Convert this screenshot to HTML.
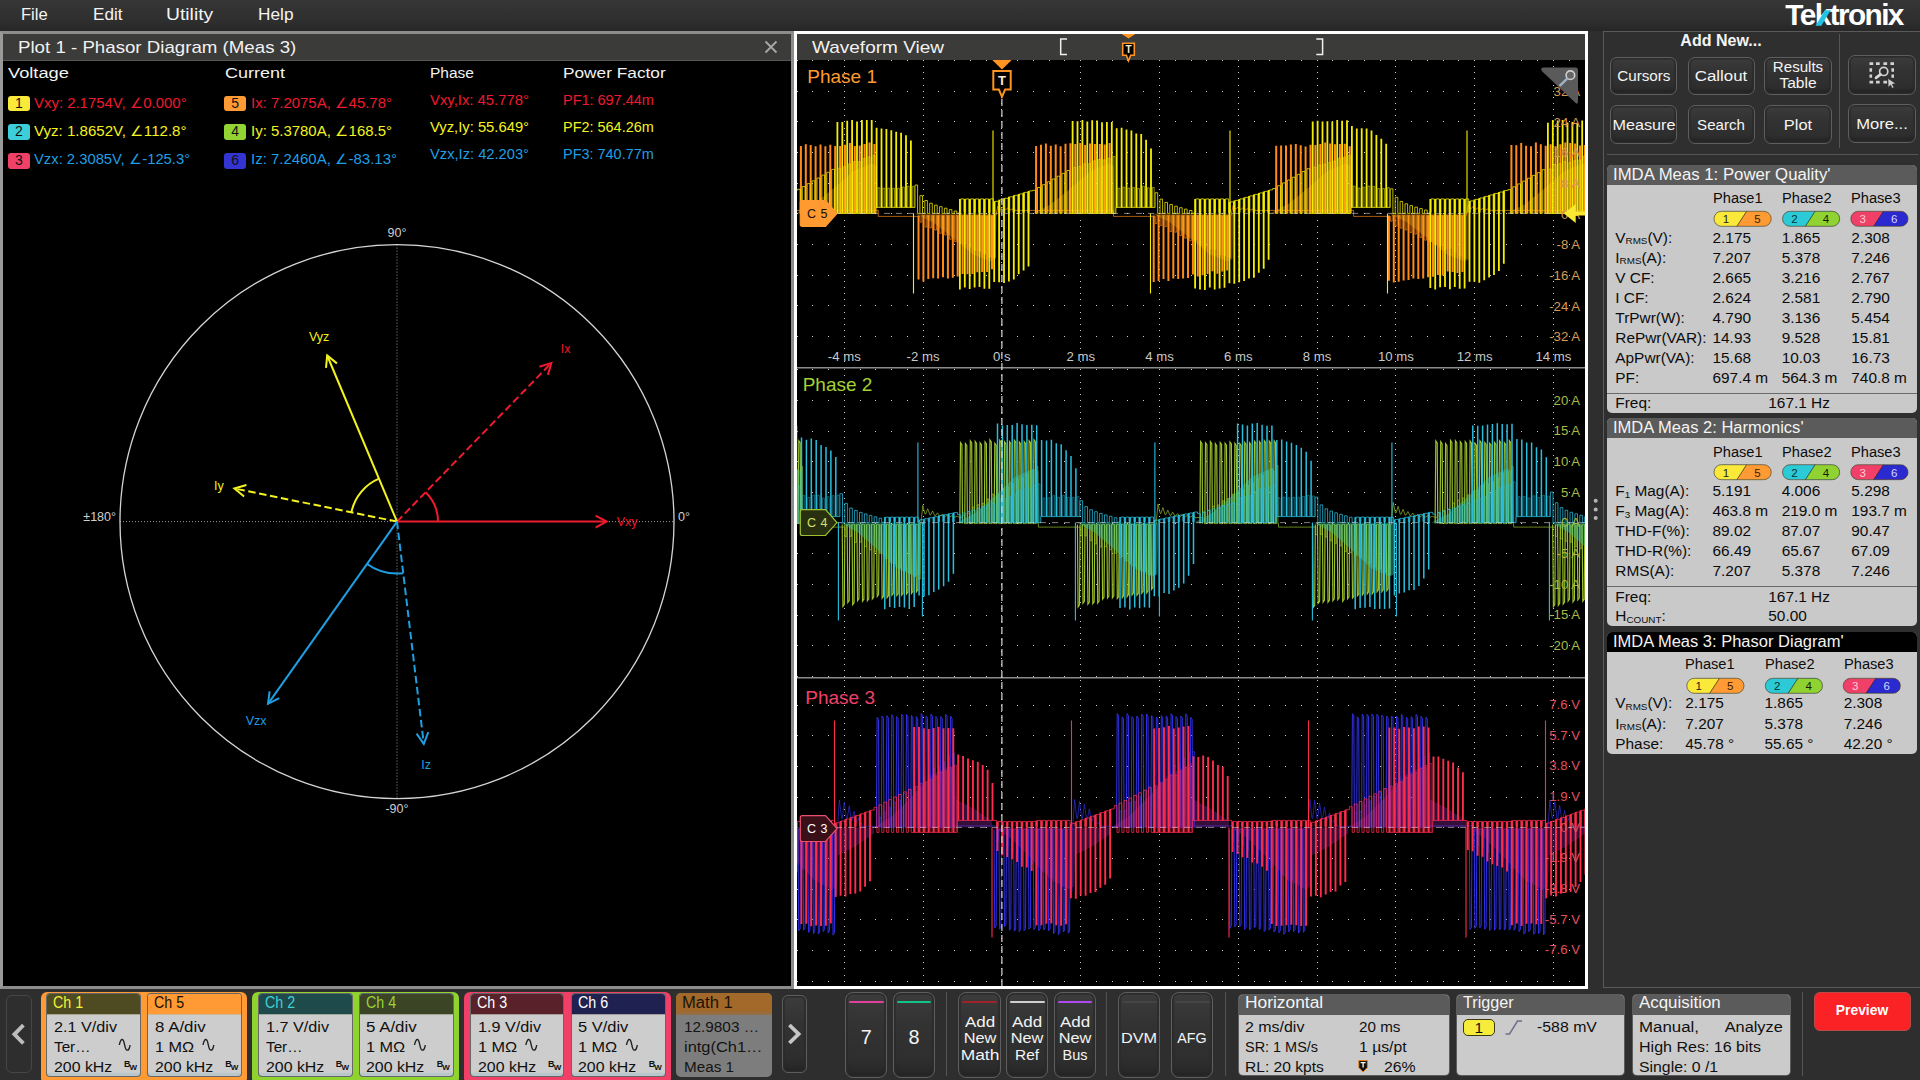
<!DOCTYPE html>
<html><head><meta charset="utf-8"><title>Tektronix IMDA</title>
<style>
html,body{margin:0;padding:0;background:#2e2e2e;overflow:hidden;}
body{width:1920px;height:1080px;position:relative;overflow:hidden;
 font-family:"Liberation Sans",sans-serif;}
.t{position:absolute;line-height:1;white-space:nowrap;}
.b{position:absolute;box-sizing:border-box;}
svg{position:absolute;left:0;top:0;overflow:visible;}
sub{font-size:64%;vertical-align:baseline;position:relative;top:0.17em;}
.btn{position:absolute;box-sizing:border-box;border:1.5px solid #5e5e5e;border-radius:7px;
 background:linear-gradient(#3c3c3c,#333 35%,#2e2e2e 80%,#262626);
 box-shadow:inset 0 0 0 1.5px #2b2b2b, inset 0 -3px 3px 0 #242424;}
</style></head>
<body>
<div class="b" style="left:0.00px;top:0.00px;width:1920.00px;height:31.00px;background:linear-gradient(#363636,#2e2e2e 70%,#262626);"></div>
<div class="t" style="top:5.52px;font-size:16.4px;color:#f4f4f4;left:21.30px;transform-origin:0 0;transform:scaleX(1.011);">File</div>
<div class="t" style="top:5.52px;font-size:16.4px;color:#f4f4f4;left:92.50px;transform-origin:0 0;transform:scaleX(1.044);">Edit</div>
<div class="t" style="top:5.52px;font-size:16.4px;color:#f4f4f4;left:165.80px;transform-origin:0 0;transform:scaleX(1.178);">Utility</div>
<div class="t" style="top:5.52px;font-size:16.4px;color:#f4f4f4;left:257.50px;transform-origin:0 0;transform:scaleX(1.053);">Help</div>
<div class="t" style="left:1785.3px;top:0.4px;font-size:29.8px;font-weight:700;color:#fff;letter-spacing:-1.6px;transform-origin:0 0;transform:scaleX(1.0);">Tektronix</div>
<svg width="1920" height="1080"><polygon points="1815.6,25.7 1821.3,25.7 1830.6,10.2 1824.9,10.2" fill="#22c4e2"/></svg>
<div class="b" style="left:0.00px;top:31.00px;width:794.00px;height:958.00px;background:#000;border:3px solid #8c8c8c;border-left-color:#9a9a9a;"></div>
<div class="b" style="left:3.00px;top:34.00px;width:788.00px;height:27.00px;background:#3b3b39;border-bottom:1px solid #555;"></div>
<div class="t" style="top:39.75px;font-size:16.6px;color:#f2f2f2;left:17.50px;transform-origin:0 0;transform:scaleX(1.126);">Plot 1 - Phasor Diagram (Meas 3)</div>
<svg width="1920" height="1080"><path d="M765.5 41.5l11 11M776.5 41.5l-11 11" stroke="#a8a8a8" stroke-width="1.8" fill="none"/></svg>
<div class="b" style="left:794.00px;top:31.00px;width:794.00px;height:958.00px;background:#000;border:3px solid #fff;"></div>
<div class="b" style="left:797.00px;top:34.00px;width:788.00px;height:26.00px;background:#3b3b39;"></div>
<div class="t" style="top:40.15px;font-size:16.6px;color:#f2f2f2;left:811.70px;transform-origin:0 0;transform:scaleX(1.145);">Waveform View</div>
<svg width="1920" height="1080" font-family="Liberation Sans, sans-serif"><path d="M120.0 521.6H674.0M397.0 244.60000000000002V798.6" stroke="#9a9a9a" stroke-width="1" stroke-dasharray="1 2" fill="none"/><circle cx="397.0" cy="521.6" r="277.0" fill="none" stroke="#d4d4d4" stroke-width="1.3"/><text x="397.0" y="236.5" font-size="12.5" fill="#cfcfcf" text-anchor="middle">90°</text><text x="397.0" y="812.5" font-size="12.5" fill="#cfcfcf" text-anchor="middle">-90°</text><text x="116" y="521" font-size="12.5" fill="#cfcfcf" text-anchor="end">±180°</text><text x="678" y="521" font-size="12.5" fill="#cfcfcf">0°</text><path d="M438.0 521.6A41 41 0 0 0 425.6 492.2" fill="none" stroke="#ee1a2e" stroke-width="2"/><path d="M379.0 478.7A46.5 46.5 0 0 0 351.4 512.3" fill="none" stroke="#f3f31f" stroke-width="2"/><path d="M367.0 564.0A52 52 0 0 0 403.2 573.2" fill="none" stroke="#1f9fe2" stroke-width="2"/><line x1="397.0" y1="521.6" x2="606.6" y2="521.6" stroke="#ee1a2e" stroke-width="2"/><polyline points="595.6,515.7 606.6,521.6 595.6,527.5" fill="none" stroke="#ee1a2e" stroke-width="2" stroke-linejoin="miter"/><text x="627.1" y="525.9" font-size="12.5" fill="#ee1a2e" text-anchor="middle">Vxy</text><line x1="397.0" y1="521.6" x2="551.4" y2="362.9" stroke="#ee1a2e" stroke-width="2" stroke-dasharray="7.5 3.6"/><polyline points="539.5,366.7 551.4,362.9 547.9,374.9" fill="none" stroke="#ee1a2e" stroke-width="2" stroke-linejoin="miter"/><text x="565.7" y="352.5" font-size="12.5" fill="#ee1a2e" text-anchor="middle">Ix</text><line x1="397.0" y1="521.6" x2="327.2" y2="355.5" stroke="#f3f31f" stroke-width="2"/><polyline points="326.0,367.9 327.2,355.5 336.9,363.4" fill="none" stroke="#f3f31f" stroke-width="2" stroke-linejoin="miter"/><text x="319.2" y="340.9" font-size="12.5" fill="#f3f31f" text-anchor="middle">Vyz</text><line x1="397.0" y1="521.6" x2="234.4" y2="488.5" stroke="#f3f31f" stroke-width="2" stroke-dasharray="7.5 3.6"/><polyline points="244.1,496.5 234.4,488.5 246.4,485.0" fill="none" stroke="#f3f31f" stroke-width="2" stroke-linejoin="miter"/><text x="218.8" y="489.6" font-size="12.5" fill="#f3f31f" text-anchor="middle">Iy</text><line x1="397.0" y1="521.6" x2="268.0" y2="703.8" stroke="#1f9fe2" stroke-width="2"/><polyline points="279.2,698.1 268.0,703.8 269.6,691.4" fill="none" stroke="#1f9fe2" stroke-width="2" stroke-linejoin="miter"/><text x="256.2" y="724.8" font-size="12.5" fill="#1f9fe2" text-anchor="middle">Vzx</text><line x1="397.0" y1="521.6" x2="423.8" y2="743.9" stroke="#1f9fe2" stroke-width="2" stroke-dasharray="7.5 3.6"/><polyline points="428.3,732.2 423.8,743.9 416.6,733.6" fill="none" stroke="#1f9fe2" stroke-width="2" stroke-linejoin="miter"/><text x="426.2" y="768.5" font-size="12.5" fill="#1f9fe2" text-anchor="middle">Iz</text></svg>
<svg width="1920" height="1080" font-family="Liberation Sans, sans-serif"><g stroke="#cacaca" stroke-width="1" fill="none" shape-rendering="crispEdges"><path d="M796.52 60.5H1585M796.52 91.5H1585M796.52 121.5H1585M796.52 152.5H1585M796.52 183.5H1585M796.52 213.5H1585M796.52 244.5H1585M796.52 275.5H1585M796.52 305.5H1585M796.52 336.5H1585" stroke-dasharray="1 14.760"/><path d="M844.5 60.06V367M923.5 60.06V367M1001.5 60.06V367M1080.5 60.06V367M1159.5 60.06V367M1238.5 60.06V367M1317.5 60.06V367M1395.5 60.06V367M1474.5 60.06V367M1553.5 60.06V367" stroke-dasharray="1 5.133"/><path d="M796.52 369.5H1585M796.52 400.5H1585M796.52 431.5H1585M796.52 461.5H1585M796.52 492.5H1585M796.52 523.5H1585M796.52 553.5H1585M796.52 584.5H1585M796.52 615.5H1585M796.52 645.5H1585M796.52 676.5H1585" stroke-dasharray="1 14.760"/><path d="M844.5 369.26V677M923.5 369.26V677M1001.5 369.26V677M1080.5 369.26V677M1159.5 369.26V677M1238.5 369.26V677M1317.5 369.26V677M1395.5 369.26V677M1474.5 369.26V677M1553.5 369.26V677" stroke-dasharray="1 5.133"/><path d="M796.52 705.5H1585M796.52 735.5H1585M796.52 766.5H1585M796.52 797.5H1585M796.52 827.5H1585M796.52 858.5H1585M796.52 889.5H1585M796.52 919.5H1585M796.52 950.5H1585M796.52 981.5H1585" stroke-dasharray="1 14.760"/><path d="M844.5 680.20V986M923.5 680.20V986M1001.5 680.20V986M1080.5 680.20V986M1159.5 680.20V986M1238.5 680.20V986M1317.5 680.20V986M1395.5 680.20V986M1474.5 680.20V986M1553.5 680.20V986" stroke-dasharray="1 5.133"/></g><path d="M797 367.7H1585M797 677.7H1585" stroke="#8c8c8c" stroke-width="1.6" fill="none"/><clipPath id="c0"><rect x="797.0" y="60.0" width="788.0" height="307.0"/></clipPath><g clip-path="url(#c0)" fill="none" stroke-linejoin="miter"><path d="M782.2 213.4H785.2V210.4H790.1V210.4H795V210.4H878.3V216.4H883.2V216.4H888.1V216.4H893V216.4H897.9V216.4H902.8V216.4H907.7V216.4H912.6V216.4H920.1V222.2H921.8V215.4H925V227.1H926.7V215.4H929.9V227.9H931.6V215.4H934.8V230H936.5V215.4H939.7V233.4H941.4V215.4H944.6V235H946.3V215.4H949.5V239.3H951.2V215.4H954.4V241.7H956.1V215.4H959.3V243.5H961V215.4H964.2V243.9H965.9V215.4H969.1V247.3H970.8V215.4H974V250.1H975.7V215.4H978.9V251.3H980.6V215.4H983.8V254.2H985.5V215.4H988.7V257.2H990.4V215.4H993.6V257.5H995.3V215.4H995.9L997.9 206L1000.1 209.1H1000.8L1002.8 207.3L1005 209.5H1005.7L1007.7 208.2L1009.9 209.7H1010.6L1012.6 208.9L1014.8 209.9H1015.5V210.4H1020.4V210.4H1025.3V210.4H1030.2V210.4H1113.5V216.4H1118.4V216.4H1123.3V216.4H1128.2V216.4H1133.1V216.4H1138V216.4H1142.9V216.4H1147.8V216.4H1155.3V223.5H1157V215.4H1160.2V225.4H1161.9V215.4H1165.1V226.6H1166.8V215.4H1170V231.6H1171.7V215.4H1174.9V232.2H1176.6V215.4H1179.8V235.7H1181.5V215.4H1184.7V238.2H1186.4V215.4H1189.6V240.8H1191.3V215.4H1194.5V240.3H1196.2V215.4H1199.4V245.2H1201.1V215.4H1204.3V247.1H1206V215.4H1209.2V248.9H1210.9V215.4H1214.1V249.3H1215.8V215.4H1219V254.8H1220.7V215.4H1223.9V255.7H1225.6V215.4H1228.8V257.7H1230.5V215.4H1231.1L1233.1 205.4L1235.3 208.9H1236L1238 206.9L1240.2 209.3H1240.9L1242.9 207.9L1245.1 209.7H1245.8L1247.8 208.7L1250 209.9H1250.7L1252.7 209.2L1254.9 210H1255.6V210.4H1260.5V210.4H1265.4V210.4H1270.3V210.4H1353.6V216.4H1358.5V216.4H1363.4V216.4H1368.3V216.4H1373.2V216.4H1378.1V216.4H1383V216.4H1390.5V221.2H1392.2V215.4H1395.4V225.9H1397.1V215.4H1400.3V228.2H1402V215.4H1405.2V230H1406.9V215.4H1410.1V232.5H1411.8V215.4H1415V234.1H1416.7V215.4H1419.9V237.6H1421.6V215.4H1424.8V240.2H1426.5V215.4H1429.7V241.9H1431.4V215.4H1434.6V244.5H1436.3V215.4H1439.5V245.8H1441.2V215.4H1444.4V249.5H1446.1V215.4H1449.3V248.4H1451V215.4H1454.2V251.8H1455.9V215.4H1459.1V256.1H1460.8V215.4H1464V258H1465.7V215.4H1466.3L1468.3 204.7L1470.5 208.7H1471.2L1473.2 206.4L1475.4 209.2H1476.1L1478.1 207.6L1480.3 209.6H1481L1483 208.4L1485.2 209.8H1485.9L1487.9 209L1490.1 210H1490.8V210.4H1495.7V210.4H1500.6V210.4H1505.5V210.4H1588.8V216.4H1593.7V216.4H1598.6V216.4H1603.5V216.4H1608.4V216.4H1613.3V216.4H1588" stroke="#ff8a18" stroke-width="0.9" opacity="0.75"/><path d="M800.9 146.1V213.4M805.8 144.3V213.4M810.7 144.9V213.4M815.6 146.2V213.4M820.5 144.4V213.4M825.4 146.3V213.4M830.3 144.7V213.4M835.2 146.1V213.4M840.1 146V213.4M845 144.7V213.4M849.9 143.1V213.4M854.8 145.9V213.4M859.7 145.5V213.4M864.6 143.9V213.4M869.5 142.6V213.4M874.4 144.1V213.4M918.5 215.4V279.6M923.4 215.4V281.4M928.3 215.4V279.1M933.2 215.4V278.2M938.1 215.4V278.6M943 215.4V277.2M947.9 215.4V278.4M952.8 215.4V277.8M957.7 215.4V276.5M962.6 215.4V273.9M967.5 215.4V274.2M972.4 215.4V274M977.3 215.4V272.2M982.2 215.4V272M987.1 215.4V272M992 215.4V269.3M1036.1 145.9V213.4M1041 144.7V213.4M1045.9 143.4V213.4M1050.8 145.8V213.4M1055.7 144.4V213.4M1060.6 146.2V213.4M1065.5 143.7V213.4M1070.4 143.3V213.4M1075.3 144.1V213.4M1080.2 142.9V213.4M1085.1 145.1V213.4M1090 143.6V213.4M1094.9 144V213.4M1099.8 144.1V213.4M1104.7 144.6V213.4M1109.6 143V213.4M1153.7 215.4V282M1158.6 215.4V280.9M1163.5 215.4V279M1168.4 215.4V280.9M1173.3 215.4V278.5M1178.2 215.4V279M1183.1 215.4V278.5M1188 215.4V278M1192.9 215.4V274.5M1197.8 215.4V276.4M1202.7 215.4V275.2M1207.6 215.4V273.9M1212.5 215.4V271.3M1217.4 215.4V273.8M1222.3 215.4V271.6M1227.2 215.4V270.5M1276.2 145.7V213.4M1281.1 145.5V213.4M1286 145.5V213.4M1290.9 144.5V213.4M1295.8 144V213.4M1300.7 145.3V213.4M1305.6 146.4V213.4M1310.5 144.7V213.4M1315.4 144.9V213.4M1320.3 144.1V213.4M1325.2 142.6V213.4M1330.1 143.6V213.4M1335 144.3V213.4M1339.9 143.9V213.4M1344.8 143.7V213.4M1349.7 146.2V213.4M1388.9 215.4V280.8M1393.8 215.4V282.4M1398.7 215.4V281.7M1403.6 215.4V280.4M1408.5 215.4V279.9M1413.4 215.4V278.5M1418.3 215.4V279M1423.2 215.4V278.5M1428.1 215.4V277.2M1433 215.4V276.7M1437.9 215.4V275M1442.8 215.4V275.6M1447.7 215.4V271.6M1452.6 215.4V271.9M1457.5 215.4V273.1M1462.4 215.4V272M1511.4 145V213.4M1516.3 145.3V213.4M1521.2 143.1V213.4M1526.1 145.8V213.4M1531 146.3V213.4M1535.9 142.6V213.4M1540.8 144.3V213.4M1545.7 145.8V213.4M1550.6 144.2V213.4M1555.5 146.3V213.4M1560.4 144.3V213.4M1565.3 142.5V213.4M1570.2 142.9V213.4M1575.1 143.6V213.4M1580 145.4V213.4M1584.9 144.9V213.4" stroke="#ff8a18" stroke-width="2.0"/><path d="M-152.5 213.4L-134.5 204.4L-114.5 188.4L-94.5 170.9L-76.5 163.4L-71.5 165.9L-70.5 213.4ZM-33.5 213.4L-15.5 222L4.5 237.4L24.5 254.2L42.5 261.4L47.5 259L48.5 213.4ZM84.5 213.4L102.5 204.4L122.5 188.4L142.5 170.9L160.5 163.4L165.5 165.9L166.5 213.4ZM203.5 213.4L221.5 222L241.5 237.4L261.5 254.2L279.5 261.4L284.5 259L285.5 213.4ZM321.5 213.4L339.5 204.4L359.5 188.4L379.5 170.9L397.5 163.4L402.5 165.9L403.5 213.4ZM440.5 213.4L458.5 222L478.5 237.4L498.5 254.2L516.5 261.4L521.5 259L522.5 213.4ZM558.5 213.4L576.5 204.4L596.5 188.4L616.5 170.9L634.5 163.4L639.5 165.9L640.5 213.4ZM677.5 213.4L695.5 222L715.5 237.4L735.5 254.2L753.5 261.4L758.5 259L759.5 213.4ZM795.5 213.4L813.5 204.4L833.5 188.4L853.5 170.9L871.5 163.4L876.5 165.9L877.5 213.4ZM914.5 213.4L932.5 222L952.5 237.4L972.5 254.2L990.5 261.4L995.5 259L996.5 213.4ZM1032.5 213.4L1050.5 204.4L1070.5 188.4L1090.5 170.9L1108.5 163.4L1113.5 165.9L1114.5 213.4ZM1151.5 213.4L1169.5 222L1189.5 237.4L1209.5 254.2L1227.5 261.4L1232.5 259L1233.5 213.4ZM1269.5 213.4L1287.5 204.4L1307.5 188.4L1327.5 170.9L1345.5 163.4L1350.5 165.9L1351.5 213.4ZM1388.5 213.4L1406.5 222L1426.5 237.4L1446.5 254.2L1464.5 261.4L1469.5 259L1470.5 213.4ZM1506.5 213.4L1524.5 204.4L1544.5 188.4L1564.5 170.9L1582.5 163.4L1587.5 165.9L1588.5 213.4ZM1625.5 213.4L1643.5 222L1663.5 237.4L1683.5 254.2L1701.5 261.4L1706.5 259L1707.5 213.4ZM1743.5 213.4L1761.5 204.4L1781.5 188.4L1801.5 170.9L1819.5 163.4L1824.5 165.9L1825.5 213.4ZM1862.5 213.4L1880.5 222L1900.5 237.4L1920.5 254.2L1938.5 261.4L1943.5 259L1944.5 213.4Z" fill="#ffb41a" stroke="none" opacity="0.3"/><path d="M779.7 213.4H782.7V212.4H784.3V193.3H787.6V212.4H789.2V191.8H792.5V212.4H794.1V190.3H797.4V189.3H800.2V213.4H802.3V186.5H805.1V213.4H807.2V183.6H810V213.4H812.1V180.8H814.9V213.4H817V178H819.8V213.4H821.9V175.1H824.7V213.4H826.8V172.3H829.6V213.4H831.7V169.4H834.5V213.4H836.6V213.4H841.5V213.4H846.4V213.4H851.3V213.4H856.2V213.4H861.1V213.4H866V213.4H870.9V213.4H875.8V207.4H880.7V207.4H885.6V207.4H890.5V207.4H895.4V207.4H900.3V207.4H905.2V207.4H910.1V207.4H915V185H917.6V213.4H919.9V195.7H922.5V213.4H924.8V200.5H927.4V213.4H929.7V203.2H932.3V213.4H934.6V205.1H937.2V213.4H939.5V206.7H942.1V213.4H944.4V208.2H947V213.4H949.3V209.6H951.9V213.4H954.2V211H956.8V213.4H959.1V212.4H960.7V198.9H964V212.4H965.6V198.9H968.9V212.4H970.5V198.9H973.8V212.4H975.4V198.9H978.7V212.4H980.3V198.9H983.6V212.4H985.2V198.9H988.5V212.4H990.1V198.9H993.4V212.4H995V201.3H998.3V212.4H999.9V199.8H1003.2V212.4H1004.8V198.3H1008.1V212.4H1009.7V196.8H1013V212.4H1014.6V195.3H1017.9V212.4H1019.5V193.9H1022.8V212.4H1024.4V192.4H1027.7V212.4H1029.3V190.9H1032.6V190.3H1035.4V213.4H1037.5V187.5H1040.3V213.4H1042.4V184.7H1045.2V213.4H1047.3V181.8H1050.1V213.4H1052.2V179H1055V213.4H1057.1V176.2H1059.9V213.4H1062V173.3H1064.8V213.4H1066.9V170.5H1069.7V213.4H1071.8V213.4H1076.7V213.4H1081.6V213.4H1086.5V213.4H1091.4V213.4H1096.3V213.4H1101.2V213.4H1106.1V213.4H1111V213.4H1115.9V207.4H1120.8V207.4H1125.7V207.4H1130.6V207.4H1135.5V207.4H1140.4V207.4H1145.3V207.4H1150.2V207.4H1155.1V192.7H1157.7V213.4H1160V199.1H1162.6V213.4H1164.9V202.4H1167.5V213.4H1169.8V204.5H1172.4V213.4H1174.7V206.2H1177.3V213.4H1179.6V207.7H1182.2V213.4H1184.5V209.1H1187.1V213.4H1189.4V210.5H1192V213.4H1194.3V212.4H1195.9V198.9H1199.2V212.4H1200.8V198.9H1204.1V212.4H1205.7V198.9H1209V212.4H1210.6V198.9H1213.9V212.4H1215.5V198.9H1218.8V212.4H1220.4V198.9H1223.7V212.4H1225.3V198.9H1228.6V212.4H1230.2V201.9H1233.5V212.4H1235.1V200.4H1238.4V212.4H1240V198.9H1243.3V212.4H1244.9V197.4H1248.2V212.4H1249.8V195.9H1253.1V212.4H1254.7V194.4H1258V212.4H1259.6V192.9H1262.9V212.4H1264.5V191.4H1267.8V212.4H1269.4V189.9H1272.7V188.5H1275.5V213.4H1277.6V185.7H1280.4V213.4H1282.5V182.9H1285.3V213.4H1287.4V180H1290.2V213.4H1292.3V177.2H1295.1V213.4H1297.2V174.4H1300V213.4H1302.1V171.5H1304.9V213.4H1307V168.7H1309.8V213.4H1311.9V213.4H1316.8V213.4H1321.7V213.4H1326.6V213.4H1331.5V213.4H1336.4V213.4H1341.3V213.4H1346.2V213.4H1351.1V207.4H1356V207.4H1360.9V207.4H1365.8V207.4H1370.7V207.4H1375.6V207.4H1380.5V207.4H1385.4V207.4H1390.3V188.8H1392.9V213.4H1395.2V197.3H1397.8V213.4H1400.1V201.4H1402.7V213.4H1405V203.8H1407.6V213.4H1409.9V205.6H1412.5V213.4H1414.8V207.1H1417.4V213.4H1419.7V208.6H1422.3V213.4H1424.6V210H1427.2V213.4H1429.5V212.4H1431.1V198.9H1434.4V212.4H1436V198.9H1439.3V212.4H1440.9V198.9H1444.2V212.4H1445.8V198.9H1449.1V212.4H1450.7V198.9H1454V212.4H1455.6V198.9H1458.9V212.4H1460.5V198.9H1463.8V212.4H1465.4V198.9H1468.7V212.4H1470.3V200.9H1473.6V212.4H1475.2V199.4H1478.5V212.4H1480.1V197.9H1483.4V212.4H1485V196.4H1488.3V212.4H1489.9V194.9H1493.2V212.4H1494.8V193.5H1498.1V212.4H1499.7V192H1503V212.4H1504.6V190.5H1507.9V189.6H1510.7V213.4H1512.8V186.8H1515.6V213.4H1517.7V183.9H1520.5V213.4H1522.6V181.1H1525.4V213.4H1527.5V178.2H1530.3V213.4H1532.4V175.4H1535.2V213.4H1537.3V172.6H1540.1V213.4H1542.2V169.7H1545V213.4H1547.1V213.4H1552V213.4H1556.9V213.4H1561.8V213.4H1566.7V213.4H1571.6V213.4H1576.5V213.4H1581.4V213.4H1586.3V213.4H1591.2V207.4H1596.1V207.4H1601V207.4H1605.9V207.4H1610.8V207.4H1588" stroke="#f6ee00" stroke-width="0.9" opacity="0.85"/><path d="M783.5 193.3V273.1M788.4 191.8V268M793.3 190.3V261.1M837.4 122.1V213.4M842.3 122.1V213.4M847.2 120.8V213.4M852.1 120V213.4M857 121.6V213.4M861.9 120.1V213.4M866.8 119.9V213.4M871.7 120V213.4M876.6 127.8V207.4M881.5 128.5V207.4M886.4 129.1V207.4M891.3 130.3V207.4M896.2 131.8V207.4M901.1 132.8V207.4M906 135.2V207.4M910.9 140.5V207.4M959.9 198.9V289.4M964.8 198.9V287.5M969.7 198.9V288.9M974.6 198.9V287.5M979.5 198.9V287M984.4 198.9V288.7M989.3 198.9V288.7M994.2 201.3V282M999.1 199.8V282.3M1004 198.3V283M1008.9 196.8V281.6M1013.8 195.3V279.4M1018.7 193.9V274.2M1023.6 192.4V270.4M1028.5 190.9V266.4M1072.6 121V213.4M1077.5 121.3V213.4M1082.4 120.1V213.4M1087.3 121.6V213.4M1092.2 120.3V213.4M1097.1 120.4V213.4M1102 122.3V213.4M1106.9 122.1V213.4M1111.8 122V213.4M1116.7 128.3V207.4M1121.6 127.7V207.4M1126.5 129.6V207.4M1131.4 130.5V207.4M1136.3 133.4V207.4M1141.2 133.9V207.4M1146.1 139.7V207.4M1151 148.5V207.4M1195.1 198.9V288.6M1200 198.9V289.4M1204.9 198.9V289.9M1209.8 198.9V287.5M1214.7 198.9V289.4M1219.6 198.9V288.5M1224.5 198.9V287.7M1229.4 201.9V283.2M1234.3 200.4V283.7M1239.2 198.9V282.3M1244.1 197.4V280.9M1249 195.9V278.4M1253.9 194.4V277.8M1258.8 192.9V272.8M1263.7 191.4V268.7M1268.6 189.9V259.8M1312.7 121.4V213.4M1317.6 120.8V213.4M1322.5 121.5V213.4M1327.4 121.3V213.4M1332.3 121.5V213.4M1337.2 120.1V213.4M1342.1 120.8V213.4M1347 120.3V213.4M1351.9 126.1V207.4M1356.8 128.5V207.4M1361.7 128.3V207.4M1366.6 128.4V207.4M1371.5 130.5V207.4M1376.4 135V207.4M1381.3 138.7V207.4M1386.2 143.7V207.4M1430.3 198.9V287.9M1435.2 198.9V289.5M1440.1 198.9V287.3M1445 198.9V287M1449.9 198.9V289.2M1454.8 198.9V287M1459.7 198.9V288.7M1464.6 198.9V288.4M1469.5 200.9V281.8M1474.4 199.4V281.7M1479.3 197.9V282.7M1484.2 196.4V280.2M1489.1 194.9V277.6M1494 193.5V274.9M1498.9 192V270.9M1503.8 190.5V263.7M1547.9 122.7V213.4M1552.8 119.9V213.4M1557.7 120.5V213.4M1562.6 120V213.4M1567.5 122.6V213.4M1572.4 122.1V213.4M1577.3 122.8V213.4M1582.2 120.6V213.4M1587.1 122.1V213.4M1592 128.7V207.4M1596.9 128.4V207.4M1601.8 128V207.4M1606.7 129.8V207.4M1611.6 133.7V207.4" stroke="#f6ee00" stroke-width="1.8"/><path d="M913.5 213.4V293.4M993 213.4V130.4M1150.5 213.4V293.4M1230 213.4V130.4M1387.5 213.4V293.4M1467 213.4V130.4" stroke="#f6ee00" stroke-width="1.1"/><path d="M838.8 213.4V168.1H840.6V213.4M843.7 213.4V166.6H845.5V213.4M848.6 213.4V163.8H850.4V213.4M853.5 213.4V161.5H855.3V213.4M858.4 213.4V161.5H860.2V213.4M863.3 213.4V158.5H865.1V213.4M868.2 213.4V156.9H870V213.4M873.1 213.4V155.5H874.9V213.4M878 207.4V187.8H879.8V207.4M882.9 207.4V188.2H884.7V207.4M887.8 207.4V188.2H889.6V207.4M892.7 207.4V188.3H894.5V207.4M897.6 207.4V188.3H899.4V207.4M902.5 207.4V187H904.3V207.4M907.4 207.4V186.2H909.2V207.4M912.3 207.4V186.4H914.1V207.4M1074 213.4V167.5H1075.8V213.4M1078.9 213.4V166.4H1080.7V213.4M1083.8 213.4V163.7H1085.6V213.4M1088.7 213.4V163.6H1090.5V213.4M1093.6 213.4V160.8H1095.4V213.4M1098.5 213.4V159.4H1100.3V213.4M1103.4 213.4V159.8H1105.2V213.4M1108.3 213.4V158.1H1110.1V213.4M1113.2 213.4V156.5H1115V213.4M1118.1 207.4V188.2H1119.9V207.4M1123 207.4V187.1H1124.8V207.4M1127.9 207.4V188.1H1129.7V207.4M1132.8 207.4V187.6H1134.6V207.4M1137.7 207.4V188.5H1139.5V207.4M1142.6 207.4V186.2H1144.4V207.4M1147.5 207.4V187.8H1149.3V207.4M1152.4 207.4V187.5H1154.2V207.4M1314.1 213.4V167H1315.9V213.4M1319 213.4V164.9H1320.8V213.4M1323.9 213.4V164.1H1325.7V213.4M1328.8 213.4V162.4H1330.6V213.4M1333.7 213.4V161H1335.5V213.4M1338.6 213.4V158.1H1340.4V213.4M1343.5 213.4V157.3H1345.3V213.4M1348.4 213.4V155.3H1350.2V213.4M1353.3 207.4V186.1H1355.1V207.4M1358.2 207.4V188.1H1360V207.4M1363.1 207.4V187.2H1364.9V207.4M1368 207.4V186.1H1369.8V207.4M1372.9 207.4V186.4H1374.7V207.4M1377.8 207.4V188.5H1379.6V207.4M1382.7 207.4V188.5H1384.5V207.4M1387.6 207.4V187.6H1389.4V207.4M1549.3 213.4V168.9H1551.1V213.4M1554.2 213.4V164.6H1556V213.4M1559.1 213.4V163.7H1560.9V213.4M1564 213.4V161.6H1565.8V213.4M1568.9 213.4V162.7H1570.7V213.4M1573.8 213.4V160.7H1575.6V213.4M1578.7 213.4V159.9H1580.5V213.4M1583.6 213.4V156.1H1585.4V213.4M1588.5 213.4V156.2H1590.3V213.4M1593.4 207.4V188.5H1595.2V207.4M1598.3 207.4V187.6H1600.1V207.4M1603.2 207.4V186.2H1605V207.4M1608.1 207.4V186.4H1609.9V207.4M1613 207.4V188.1H1614.8V207.4" stroke="#f6ee00" stroke-width="0.9" opacity="0.6"/></g><clipPath id="c1"><rect x="797.0" y="368.5" width="788.0" height="308.5"/></clipPath><g clip-path="url(#c1)" fill="none" stroke-linejoin="miter"><path d="M780.6 522.6H786.2V477.8H787.9V523.6H791.1V471.6H792.8V523.6H796V470H797.7V523.6H800.9V466.4H802.6V523.6H803.2V527.1H808.1V527.1H813V527.1H817.9V527.1H822.8V527.1H827.7V527.1H832.6V527.1H837.5V527.1H845V536.6H846.7V524.6H849.9V536.3H851.6V524.6H854.8V542.4H856.5V524.6H859.7V542.1H861.4V524.6H864.6V546.6H866.3V524.6H869.5V549.9H871.2V524.6H874.4V551.9H876.1V524.6H879.3V553.3H881V524.6H884.2V558.8H885.9V524.6H889.1V562.2H890.8V524.6H894V563.5H895.7V524.6H898.9V567.5H900.6V524.6H903.8V570.9H905.5V524.6H908.7V573.5H910.4V524.6H913.6V576.8H915.3V524.6H918.5V579.1H920.2V524.6H920.8L922.8 505.4L925 514H925.7L927.7 508.7L929.9 514.9H930.6L932.6 511L934.8 515.6H935.5L937.5 512.8L939.7 516.1H940.4L942.4 514L944.6 516.5H945.3L947.3 515L949.5 516.8H950.2L952.2 515.7L954.4 517H955.1L957.1 516.2L959.3 517.2H962.6V515.1H964.3V523.6H967.5V513H969.2V523.6H972.4V507.1H974.1V523.6H977.3V504.8H979V523.6H982.2V503.2H983.9V523.6H987.1V499H988.8V523.6H992V494.1H993.7V523.6H996.9V494.3H998.6V523.6H1001.8V488.4H1003.5V523.6H1006.7V486.9H1008.4V523.6H1011.6V483.6H1013.3V523.6H1016.5V479.2H1018.2V523.6H1021.4V477.9H1023.1V523.6H1026.3V474.4H1028V523.6H1031.2V470.6H1032.9V523.6H1036.1V466.4H1037.8V523.6H1038.4V527.1H1043.3V527.1H1048.2V527.1H1053.1V527.1H1058V527.1H1062.9V527.1H1067.8V527.1H1072.7V527.1H1080.2V535.6H1081.9V524.6H1085.1V535.8H1086.8V524.6H1090V540.6H1091.7V524.6H1094.9V543.8H1096.6V524.6H1099.8V547H1101.5V524.6H1104.7V546.8H1106.4V524.6H1109.6V549.6H1111.3V524.6H1114.5V553.2H1116.2V524.6H1119.4V557.7H1121.1V524.6H1124.3V560.7H1126V524.6H1129.2V563.4H1130.9V524.6H1134.1V565.6H1135.8V524.6H1139V569.6H1140.7V524.6H1143.9V571.3H1145.6V524.6H1148.8V574.9H1150.5V524.6H1153.7V575H1155.4V524.6H1156L1158 504L1160.2 513.5H1160.9L1162.9 507.6L1165.1 514.6H1165.8L1167.8 510.2L1170 515.4H1170.7L1172.7 512.2L1174.9 516H1175.6L1177.6 513.6L1179.8 516.4H1180.5L1182.5 514.7L1184.7 516.7H1185.4L1187.4 515.4L1189.6 517H1190.3L1192.3 516L1194.5 517.1H1195.2V517.6H1202.7V512.2H1204.4V523.6H1207.6V510.3H1209.3V523.6H1212.5V506.1H1214.2V523.6H1217.4V505H1219.1V523.6H1222.3V500.9H1224V523.6H1227.2V498.6H1228.9V523.6H1232.1V494.3H1233.8V523.6H1237V492.7H1238.7V523.6H1241.9V489.7H1243.6V523.6H1246.8V485.5H1248.5V523.6H1251.7V482.7H1253.4V523.6H1256.6V478.3H1258.3V523.6H1261.5V475.4H1263.2V523.6H1266.4V471.5H1268.1V523.6H1271.3V468.8H1273V523.6H1276.2V465.5H1277.9V523.6H1278.5V527.1H1283.4V527.1H1288.3V527.1H1293.2V527.1H1298.1V527.1H1303V527.1H1307.9V527.1H1315.4V534.6H1317.1V524.6H1320.3V534.3H1322V524.6H1325.2V537H1326.9V524.6H1330.1V540.9H1331.8V524.6H1335V543.3H1336.7V524.6H1339.9V545.9H1341.6V524.6H1344.8V551.4H1346.5V524.6H1349.7V552.8H1351.4V524.6H1354.6V555.7H1356.3V524.6H1359.5V557.3H1361.2V524.6H1364.4V560.3H1366.1V524.6H1369.3V563H1371V524.6H1374.2V566.9H1375.9V524.6H1379.1V568.5H1380.8V524.6H1384V572.2H1385.7V524.6H1388.9V575H1390.6V524.6H1391.2L1393.2 502.4L1395.4 513H1396.1L1398.1 506.4L1400.3 514.2H1401L1403 509.4L1405.2 515.1H1405.9L1407.9 511.5L1410.1 515.8H1410.8L1412.8 513.1L1415 516.3H1415.7L1417.7 514.3L1419.9 516.6H1420.6L1422.6 515.2L1424.8 516.9H1425.5L1427.5 515.8L1429.7 517.1H1430.4L1432.4 516.3L1434.6 517.2H1437.9V512.6H1439.6V523.6H1442.8V510.3H1444.5V523.6H1447.7V509.2H1449.4V523.6H1452.6V503H1454.3V523.6H1457.5V500.1H1459.2V523.6H1462.4V498H1464.1V523.6H1467.3V494.9H1469V523.6H1472.2V491.3H1473.9V523.6H1477.1V490.6H1478.8V523.6H1482V484.9H1483.7V523.6H1486.9V483.8H1488.6V523.6H1491.8V481.4H1493.5V523.6H1496.7V477.6H1498.4V523.6H1501.6V472.7H1503.3V523.6H1506.5V471.8H1508.2V523.6H1511.4V466.6H1513.1V523.6H1513.7V527.1H1518.6V527.1H1523.5V527.1H1528.4V527.1H1533.3V527.1H1538.2V527.1H1543.1V527.1H1548V527.1H1555.5V536.3H1557.2V524.6H1560.4V538.9H1562.1V524.6H1565.3V541.3H1567V524.6H1570.2V542.2H1571.9V524.6H1575.1V546.9H1576.8V524.6H1580V548.7H1581.7V524.6H1584.9V553.8H1586.6V524.6H1589.8V556.4H1591.5V524.6H1594.7V558.5H1596.4V524.6H1599.6V559.7H1601.3V524.6H1604.5V562.5H1606.2V524.6H1609.4V565.5H1611.1V524.6H1614.3V569.9H1616V524.6H1588" stroke="#9dc42c" stroke-width="0.9" opacity="0.75"/><path d="M783.4 523.6L784.1 443L785.5 445L786.1 523.6M788.3 523.6L789 439.9L790.4 441.9L791 523.6M793.2 523.6L793.9 441.3L795.3 443.3L795.9 523.6M798.1 523.6L798.8 440.8L800.2 442.8L800.8 523.6M842.2 524.6L842.9 606.5L844.3 604.5L844.9 524.6M847.1 524.6L847.8 602.5L849.2 600.5L849.8 524.6M852 524.6L852.7 604.7L854.1 602.7L854.7 524.6M856.9 524.6L857.6 600.6L859 598.6L859.6 524.6M861.8 524.6L862.5 601.2L863.9 599.2L864.5 524.6M866.7 524.6L867.4 600.8L868.8 598.8L869.4 524.6M871.6 524.6L872.3 599L873.7 597L874.3 524.6M876.5 524.6L877.2 596.5L878.6 594.5L879.2 524.6M881.4 524.6L882.1 598.2L883.5 596.2L884.1 524.6M886.3 524.6L887 597.8L888.4 595.8L889 524.6M891.2 524.6L891.9 595.3L893.3 593.3L893.9 524.6M896.1 524.6L896.8 595.5L898.2 593.5L898.8 524.6M901 524.6L901.7 595.1L903.1 593.1L903.7 524.6M905.9 524.6L906.6 593.9L908 591.9L908.6 524.6M910.8 524.6L911.5 593.4L912.9 591.4L913.5 524.6M915.7 524.6L916.4 591.9L917.8 589.9L918.4 524.6M959.8 523.6L960.5 442.6L961.9 444.6L962.5 523.6M964.7 523.6L965.4 443.5L966.8 445.5L967.4 523.6M969.6 523.6L970.3 440.7L971.7 442.7L972.3 523.6M974.5 523.6L975.2 441.4L976.6 443.4L977.2 523.6M979.4 523.6L980.1 442.8L981.5 444.8L982.1 523.6M984.3 523.6L985 441.7L986.4 443.7L987 523.6M989.2 523.6L989.9 439.9L991.3 441.9L991.9 523.6M994.1 523.6L994.8 443.2L996.2 445.2L996.8 523.6M999 523.6L999.7 440.3L1001.1 442.3L1001.7 523.6M1003.9 523.6L1004.6 441.9L1006 443.9L1006.6 523.6M1008.8 523.6L1009.5 441.6L1010.9 443.6L1011.5 523.6M1013.7 523.6L1014.4 440.3L1015.8 442.3L1016.4 523.6M1018.6 523.6L1019.3 442L1020.7 444L1021.3 523.6M1023.5 523.6L1024.2 441.6L1025.6 443.6L1026.2 523.6M1028.4 523.6L1029.1 440.8L1030.5 442.8L1031.1 523.6M1033.3 523.6L1034 439.7L1035.4 441.7L1036 523.6M1077.4 524.6L1078.1 606.9L1079.5 604.9L1080.1 524.6M1082.3 524.6L1083 603.3L1084.4 601.3L1085 524.6M1087.2 524.6L1087.9 604.3L1089.3 602.3L1089.9 524.6M1092.1 524.6L1092.8 603.7L1094.2 601.7L1094.8 524.6M1097 524.6L1097.7 603.1L1099.1 601.1L1099.7 524.6M1101.9 524.6L1102.6 599.1L1104 597.1L1104.6 524.6M1106.8 524.6L1107.5 598L1108.9 596L1109.5 524.6M1111.7 524.6L1112.4 597.9L1113.8 595.9L1114.4 524.6M1116.6 524.6L1117.3 598.5L1118.7 596.5L1119.3 524.6M1121.5 524.6L1122.2 597.7L1123.6 595.7L1124.2 524.6M1126.4 524.6L1127.1 596.6L1128.5 594.6L1129.1 524.6M1131.3 524.6L1132 595L1133.4 593L1134 524.6M1136.2 524.6L1136.9 595.2L1138.3 593.2L1138.9 524.6M1141.1 524.6L1141.8 593.1L1143.2 591.1L1143.8 524.6M1146 524.6L1146.7 592.9L1148.1 590.9L1148.7 524.6M1150.9 524.6L1151.6 589.2L1153 587.2L1153.6 524.6M1199.9 523.6L1200.6 441.6L1202 443.6L1202.6 523.6M1204.8 523.6L1205.5 442.8L1206.9 444.8L1207.5 523.6M1209.7 523.6L1210.4 441.6L1211.8 443.6L1212.4 523.6M1214.6 523.6L1215.3 443.6L1216.7 445.6L1217.3 523.6M1219.5 523.6L1220.2 442.5L1221.6 444.5L1222.2 523.6M1224.4 523.6L1225.1 443.2L1226.5 445.2L1227.1 523.6M1229.3 523.6L1230 442L1231.4 444L1232 523.6M1234.2 523.6L1234.9 443.4L1236.3 445.4L1236.9 523.6M1239.1 523.6L1239.8 443.5L1241.2 445.5L1241.8 523.6M1244 523.6L1244.7 442.4L1246.1 444.4L1246.7 523.6M1248.9 523.6L1249.6 442.7L1251 444.7L1251.6 523.6M1253.8 523.6L1254.5 441.3L1255.9 443.3L1256.5 523.6M1258.7 523.6L1259.4 441.5L1260.8 443.5L1261.4 523.6M1263.6 523.6L1264.3 440.6L1265.7 442.6L1266.3 523.6M1268.5 523.6L1269.2 441L1270.6 443L1271.2 523.6M1273.4 523.6L1274.1 440.7L1275.5 442.7L1276.1 523.6M1312.6 524.6L1313.3 607.3L1314.7 605.3L1315.3 524.6M1317.5 524.6L1318.2 603.2L1319.6 601.2L1320.2 524.6M1322.4 524.6L1323.1 602.1L1324.5 600.1L1325.1 524.6M1327.3 524.6L1328 602.2L1329.4 600.2L1330 524.6M1332.2 524.6L1332.9 600.8L1334.3 598.8L1334.9 524.6M1337.1 524.6L1337.8 599.6L1339.2 597.6L1339.8 524.6M1342 524.6L1342.7 601.3L1344.1 599.3L1344.7 524.6M1346.9 524.6L1347.6 598.8L1349 596.8L1349.6 524.6M1351.8 524.6L1352.5 598L1353.9 596L1354.5 524.6M1356.7 524.6L1357.4 595.7L1358.8 593.7L1359.4 524.6M1361.6 524.6L1362.3 594.9L1363.7 592.9L1364.3 524.6M1366.5 524.6L1367.2 593.9L1368.6 591.9L1369.2 524.6M1371.4 524.6L1372.1 593.9L1373.5 591.9L1374.1 524.6M1376.3 524.6L1377 591.7L1378.4 589.7L1379 524.6M1381.2 524.6L1381.9 591.6L1383.3 589.6L1383.9 524.6M1386.1 524.6L1386.8 590.6L1388.2 588.6L1388.8 524.6M1435.1 523.6L1435.8 440.9L1437.2 442.9L1437.8 523.6M1440 523.6L1440.7 441.6L1442.1 443.6L1442.7 523.6M1444.9 523.6L1445.6 443.6L1447 445.6L1447.6 523.6M1449.8 523.6L1450.5 440.4L1451.9 442.4L1452.5 523.6M1454.7 523.6L1455.4 440.6L1456.8 442.6L1457.4 523.6M1459.6 523.6L1460.3 441.6L1461.7 443.6L1462.3 523.6M1464.5 523.6L1465.2 441.5L1466.6 443.5L1467.2 523.6M1469.4 523.6L1470.1 441L1471.5 443L1472.1 523.6M1474.3 523.6L1475 443.3L1476.4 445.3L1477 523.6M1479.2 523.6L1479.9 440.7L1481.3 442.7L1481.9 523.6M1484.1 523.6L1484.8 442.6L1486.2 444.6L1486.8 523.6M1489 523.6L1489.7 443.3L1491.1 445.3L1491.7 523.6M1493.9 523.6L1494.6 442.5L1496 444.5L1496.6 523.6M1498.8 523.6L1499.5 440.7L1500.9 442.7L1501.5 523.6M1503.7 523.6L1504.4 442.8L1505.8 444.8L1506.4 523.6M1508.6 523.6L1509.3 440.6L1510.7 442.6L1511.3 523.6M1552.7 524.6L1553.4 606.6L1554.8 604.6L1555.4 524.6M1557.6 524.6L1558.3 605.4L1559.7 603.4L1560.3 524.6M1562.5 524.6L1563.2 604L1564.6 602L1565.2 524.6M1567.4 524.6L1568.1 601.1L1569.5 599.1L1570.1 524.6M1572.3 524.6L1573 601.9L1574.4 599.9L1575 524.6M1577.2 524.6L1577.9 599.9L1579.3 597.9L1579.9 524.6M1582.1 524.6L1582.8 601.2L1584.2 599.2L1584.8 524.6M1587 524.6L1587.7 600.1L1589.1 598.1L1589.7 524.6M1591.9 524.6L1592.6 598.3L1594 596.3L1594.6 524.6M1596.8 524.6L1597.5 595.8L1598.9 593.8L1599.5 524.6M1601.7 524.6L1602.4 594.7L1603.8 592.7L1604.4 524.6M1606.6 524.6L1607.3 593.9L1608.7 591.9L1609.3 524.6M1611.5 524.6L1612.2 594.5L1613.6 592.5L1614.2 524.6" stroke="#9dc42c" stroke-width="1.15"/><path d="M-227.6 522.6L-209.6 512.9L-189.6 495.6L-169.6 476.7L-151.6 468.6L-146.6 471.3L-145.6 522.6ZM-108.6 522.6L-90.6 532.3L-70.6 549.6L-50.6 568.5L-32.6 576.6L-27.6 573.9L-26.6 522.6ZM9.4 522.6L27.4 512.9L47.4 495.6L67.4 476.7L85.4 468.6L90.4 471.3L91.4 522.6ZM128.4 522.6L146.4 532.3L166.4 549.6L186.4 568.5L204.4 576.6L209.4 573.9L210.4 522.6ZM246.4 522.6L264.4 512.9L284.4 495.6L304.4 476.7L322.4 468.6L327.4 471.3L328.4 522.6ZM365.4 522.6L383.4 532.3L403.4 549.6L423.4 568.5L441.4 576.6L446.4 573.9L447.4 522.6ZM483.4 522.6L501.4 512.9L521.4 495.6L541.4 476.7L559.4 468.6L564.4 471.3L565.4 522.6ZM602.4 522.6L620.4 532.3L640.4 549.6L660.4 568.5L678.4 576.6L683.4 573.9L684.4 522.6ZM720.4 522.6L738.4 512.9L758.4 495.6L778.4 476.7L796.4 468.6L801.4 471.3L802.4 522.6ZM839.4 522.6L857.4 532.3L877.4 549.6L897.4 568.5L915.4 576.6L920.4 573.9L921.4 522.6ZM957.4 522.6L975.4 512.9L995.4 495.6L1015.4 476.7L1033.4 468.6L1038.4 471.3L1039.4 522.6ZM1076.4 522.6L1094.4 532.3L1114.4 549.6L1134.4 568.5L1152.4 576.6L1157.4 573.9L1158.4 522.6ZM1194.4 522.6L1212.4 512.9L1232.4 495.6L1252.4 476.7L1270.4 468.6L1275.4 471.3L1276.4 522.6ZM1313.4 522.6L1331.4 532.3L1351.4 549.6L1371.4 568.5L1389.4 576.6L1394.4 573.9L1395.4 522.6ZM1431.4 522.6L1449.4 512.9L1469.4 495.6L1489.4 476.7L1507.4 468.6L1512.4 471.3L1513.4 522.6ZM1550.4 522.6L1568.4 532.3L1588.4 549.6L1608.4 568.5L1626.4 576.6L1631.4 573.9L1632.4 522.6ZM1668.4 522.6L1686.4 512.9L1706.4 495.6L1726.4 476.7L1744.4 468.6L1749.4 471.3L1750.4 522.6ZM1787.4 522.6L1805.4 532.3L1825.4 549.6L1845.4 568.5L1863.4 576.6L1868.4 573.9L1869.4 522.6Z" fill="#3cc89a" stroke="none" opacity="0.42"/><path d="M778.1 522.6H781.1V522.6H786V522.6H790.9V522.6H795.8V522.6H800.7V516.6H805.6V516.6H810.5V516.6H815.4V516.6H820.3V516.6H825.2V516.6H830.1V516.6H835V516.6H839.9V493.7H842.5V522.6H844.8V503.4H847.4V522.6H849.7V508H852.3V522.6H854.6V510.5H857.2V522.6H859.5V512.4H862.1V522.6H864.4V513.9H867V522.6H869.3V515.4H871.9V522.6H874.2V516.8H876.8V522.6H879.1V518.2H881.7V522.6H884V521.6H885.6V517.1H888.9V521.6H890.5V517.1H893.8V521.6H895.4V517.1H898.7V521.6H900.3V517.1H903.6V521.6H905.2V517.1H908.5V521.6H910.1V517.1H913.4V521.6H915V517.1H918.3V521.6H919.9V519.7H923.2V521.6H924.8V518.7H928.1V521.6H929.7V517.7H933V521.6H934.6V516.7H937.9V521.6H939.5V515.6H942.8V521.6H944.4V514.6H947.7V521.6H949.3V513.6H952.6V521.6H954.2V512.6H957.5V514.6H960.3V522.6H962.4V513H965.2V522.6H967.3V511.5H970.1V522.6H972.2V509.9H975V522.6H977.1V508.4H979.9V522.6H982V506.8H984.8V522.6H986.9V505.3H989.7V522.6H991.8V503.7H994.6V522.6H996.7V522.6H1001.6V522.6H1006.5V522.6H1011.4V522.6H1016.3V522.6H1021.2V522.6H1026.1V522.6H1031V522.6H1035.9V522.6H1040.8V516.6H1045.7V516.6H1050.6V516.6H1055.5V516.6H1060.4V516.6H1065.3V516.6H1070.2V516.6H1075.1V516.6H1080V500.7H1082.6V522.6H1084.9V506.6H1087.5V522.6H1089.8V509.7H1092.4V522.6H1094.7V511.7H1097.3V522.6H1099.6V513.4H1102.2V522.6H1104.5V514.9H1107.1V522.6H1109.4V516.3H1112V522.6H1114.3V517.7H1116.9V522.6H1119.2V521.6H1120.8V517.1H1124.1V521.6H1125.7V517.1H1129V521.6H1130.6V517.1H1133.9V521.6H1135.5V517.1H1138.8V521.6H1140.4V517.1H1143.7V521.6H1145.3V517.1H1148.6V521.6H1150.2V517.1H1153.5V521.6H1155.1V520.1H1158.4V521.6H1160V519.1H1163.3V521.6H1164.9V518H1168.2V521.6H1169.8V517H1173.1V521.6H1174.7V516H1178V521.6H1179.6V515H1182.9V521.6H1184.5V514H1187.8V521.6H1189.4V513H1192.7V521.6H1194.3V512H1197.6V513.6H1200.4V522.6H1202.5V512H1205.3V522.6H1207.4V510.5H1210.2V522.6H1212.3V508.9H1215.1V522.6H1217.2V507.4H1220V522.6H1222.1V505.9H1224.9V522.6H1227V504.3H1229.8V522.6H1231.9V502.8H1234.7V522.6H1236.8V522.6H1241.7V522.6H1246.6V522.6H1251.5V522.6H1256.4V522.6H1261.3V522.6H1266.2V522.6H1271.1V522.6H1276V516.6H1280.9V516.6H1285.8V516.6H1290.7V516.6H1295.6V516.6H1300.5V516.6H1305.4V516.6H1310.3V516.6H1315.2V497.1H1317.8V522.6H1320.1V504.9H1322.7V522.6H1325V508.8H1327.6V522.6H1329.9V511.1H1332.5V522.6H1334.8V512.8H1337.4V522.6H1339.7V514.3H1342.3V522.6H1344.6V515.8H1347.2V522.6H1349.5V517.2H1352.1V522.6H1354.4V521.6H1356V517.1H1359.3V521.6H1360.9V517.1H1364.2V521.6H1365.8V517.1H1369.1V521.6H1370.7V517.1H1374V521.6H1375.6V517.1H1378.9V521.6H1380.5V517.1H1383.8V521.6H1385.4V517.1H1388.7V521.6H1390.3V517.1H1393.6V521.6H1395.2V519.4H1398.5V521.6H1400.1V518.4H1403.4V521.6H1405V517.4H1408.3V521.6H1409.9V516.4H1413.2V521.6H1414.8V515.4H1418.1V521.6H1419.7V514.4H1423V521.6H1424.6V513.3H1427.9V521.6H1429.5V512.3H1432.8V514.2H1435.6V522.6H1437.7V512.6H1440.5V522.6H1442.6V511.1H1445.4V522.6H1447.5V509.5H1450.3V522.6H1452.4V508H1455.2V522.6H1457.3V506.4H1460.1V522.6H1462.2V504.9H1465V522.6H1467.1V503.3H1469.9V522.6H1472V522.6H1476.9V522.6H1481.8V522.6H1486.7V522.6H1491.6V522.6H1496.5V522.6H1501.4V522.6H1506.3V522.6H1511.2V522.6H1516.1V516.6H1521V516.6H1525.9V516.6H1530.8V516.6H1535.7V516.6H1540.6V516.6H1545.5V516.6H1550.4V492.1H1553V522.6H1555.3V502.8H1557.9V522.6H1560.2V507.6H1562.8V522.6H1565.1V510.3H1567.7V522.6H1570V512.2H1572.6V522.6H1574.9V513.8H1577.5V522.6H1579.8V515.2H1582.4V522.6H1584.7V516.7H1587.3V522.6H1589.6V518.1H1592.2V522.6H1594.5V521.6H1596.1V517.1H1599.4V521.6H1601V517.1H1604.3V521.6H1605.9V517.1H1609.2V521.6H1610.8V517.1H1588" stroke="#27bfe0" stroke-width="0.9" opacity="0.85"/><path d="M781.9 424.6V522.6M786.8 424.7V522.6M791.7 424.7V522.6M796.6 425.7V522.6M801.5 437.4V516.6M806.4 439.8V516.6M811.3 438.4V516.6M816.2 440.1V516.6M821.1 445.1V516.6M826 447V516.6M830.9 450.4V516.6M835.8 457.1V516.6M884.8 517.1V609.2M889.7 517.1V607.1M894.6 517.1V608.1M899.5 517.1V606.9M904.4 517.1V607.5M909.3 517.1V608.9M914.2 517.1V606.9M919.1 519.7V595.6M924 518.7V596.4M928.9 517.7V595.3M933.8 516.7V592M938.7 515.6V589.5M943.6 514.6V586.3M948.5 513.6V581.8M953.4 512.6V573.8M997.5 423.4V522.6M1002.4 425.2V522.6M1007.3 425V522.6M1012.2 424.9V522.6M1017.1 423.1V522.6M1022 424.3V522.6M1026.9 425V522.6M1031.8 424.8V522.6M1036.7 425.3V522.6M1041.6 440.1V516.6M1046.5 440.6V516.6M1051.4 439.7V516.6M1056.3 443.3V516.6M1061.2 444.2V516.6M1066.1 450.3V516.6M1071 456.1V516.6M1075.9 468.3V516.6M1120 517.1V608M1124.9 517.1V607.4M1129.8 517.1V609.5M1134.7 517.1V607.4M1139.6 517.1V608.2M1144.5 517.1V607.3M1149.4 517.1V607.7M1154.3 520.1V596.2M1159.2 519.1V596.6M1164.1 518V593.1M1169 517V593.9M1173.9 516V590.5M1178.8 515V587.7M1183.7 514V583.4M1188.6 513V575.7M1193.5 512V564.1M1237.6 423.4V522.6M1242.5 424.6V522.6M1247.4 425.4V522.6M1252.3 423.4V522.6M1257.2 423.1V522.6M1262.1 424.8V522.6M1267 425.7V522.6M1271.9 425.5V522.6M1276.8 439.9V516.6M1281.7 439.6V516.6M1286.6 441.4V516.6M1291.5 442.7V516.6M1296.4 445.1V516.6M1301.3 447.7V516.6M1306.2 451.8V516.6M1311.1 460.7V516.6M1355.2 517.1V609.2M1360.1 517.1V608.1M1365 517.1V607.7M1369.9 517.1V607M1374.8 517.1V609M1379.7 517.1V608.8M1384.6 517.1V608.9M1389.5 517.1V608.4M1394.4 519.4V595.6M1399.3 518.4V593.4M1404.2 517.4V592.4M1409.1 516.4V590.3M1414 515.4V589.9M1418.9 514.4V586M1423.8 513.3V578.4M1428.7 512.3V569.4M1472.8 425.4V522.6M1477.7 425.8V522.6M1482.6 425.6V522.6M1487.5 424.5V522.6M1492.4 424.1V522.6M1497.3 423.3V522.6M1502.2 423.9V522.6M1507.1 424.2V522.6M1512 423.8V522.6M1516.9 439V516.6M1521.8 439.5V516.6M1526.7 442.6V516.6M1531.6 442.5V516.6M1536.5 447.3V516.6M1541.4 449.6V516.6M1546.3 457.2V516.6M1595.3 517.1V608.4M1600.2 517.1V608.9M1605.1 517.1V607.8M1610 517.1V609.6" stroke="#27bfe0" stroke-width="1.5"/><path d="M838.4 522.6V620.6M917.9 522.6V442.6M922.4 522.6V616.6M1075.4 522.6V620.6M1154.9 522.6V442.6M1159.4 522.6V616.6M1312.4 522.6V620.6M1391.9 522.6V442.6M1396.4 522.6V616.6M1549.4 522.6V620.6" stroke="#27bfe0" stroke-width="1.1"/><path d="M783.3 522.6V490.8H785.1V522.6M788.2 522.6V488.9H790V522.6M793.1 522.6V486.8H794.9V522.6M798 522.6V485.7H799.8V522.6M802.9 516.6V495.4H804.7V516.6M807.8 516.6V497.5H809.6V516.6M812.7 516.6V495.2H814.5V516.6M817.6 516.6V495.3H819.4V516.6M822.5 516.6V498H824.3V516.6M827.4 516.6V496.7H829.2V516.6M832.3 516.6V495.6H834.1V516.6M837.2 516.6V495.2H839V516.6M998.9 522.6V498.8H1000.7V522.6M1003.8 522.6V498.6H1005.6V522.6M1008.7 522.6V496.2H1010.5V522.6M1013.6 522.6V494.1H1015.4V522.6M1018.5 522.6V490.1H1020.3V522.6M1023.4 522.6V489.3H1025.2V522.6M1028.3 522.6V487.9H1030.1V522.6M1033.2 522.6V485.6H1035V522.6M1038.1 522.6V483.9H1039.9V522.6M1043 516.6V498H1044.8V516.6M1047.9 516.6V497.8H1049.7V516.6M1052.8 516.6V495.6H1054.6V516.6M1057.7 516.6V497.2H1059.5V516.6M1062.6 516.6V495.3H1064.4V516.6M1067.5 516.6V497.4H1069.3V516.6M1072.4 516.6V497.3H1074.2V516.6M1077.3 516.6V496.6H1079.1V516.6M1239 522.6V497.5H1240.8V522.6M1243.9 522.6V496.6H1245.7V522.6M1248.8 522.6V495.4H1250.6V522.6M1253.7 522.6V491.2H1255.5V522.6M1258.6 522.6V488.8H1260.4V522.6M1263.5 522.6V488.4H1265.3V522.6M1268.4 522.6V487.2H1270.2V522.6M1273.3 522.6V484.9H1275.1V522.6M1278.2 516.6V497.8H1280V516.6M1283.1 516.6V497.1H1284.9V516.6M1288 516.6V497.8H1289.8V516.6M1292.9 516.6V497.4H1294.7V516.6M1297.8 516.6V497.3H1299.6V516.6M1302.7 516.6V496.4H1304.5V516.6M1307.6 516.6V495.4H1309.4V516.6M1312.5 516.6V495.9H1314.3V516.6M1474.2 522.6V500.2H1476V522.6M1479.1 522.6V498.6H1480.9V522.6M1484 522.6V496.3H1485.8V522.6M1488.9 522.6V493.1H1490.7V522.6M1493.8 522.6V490.5H1495.6V522.6M1498.7 522.6V487.7H1500.5V522.6M1503.6 522.6V486.2H1505.4V522.6M1508.5 522.6V484.3H1510.3V522.6M1513.4 522.6V481.9H1515.2V522.6M1518.3 516.6V496.7H1520.1V516.6M1523.2 516.6V496.4H1525V516.6M1528.1 516.6V498H1529.9V516.6M1533 516.6V495.8H1534.8V516.6M1537.9 516.6V497.4H1539.7V516.6M1542.8 516.6V495.3H1544.6V516.6M1547.7 516.6V496.2H1549.5V516.6" stroke="#27bfe0" stroke-width="0.9" opacity="0.5"/></g><clipPath id="c2"><rect x="797.0" y="678.5" width="788.0" height="307.5"/></clipPath><g clip-path="url(#c2)" fill="none" stroke-linejoin="miter"><path d="M780.5 827.4H786.1V860.3H787.8V829.4H791V863.1H792.7V829.4H795.9V864.6H797.6V829.4H800.8V869.3H802.5V829.4H805.7V871.8H807.4V829.4H810.6V876.9H812.3V829.4H815.5V881.3H817.2V829.4H820.4V884.7H822.1V829.4H825.3V885.3H827V829.4H830.2V889.8H831.9V829.4H835.1V894.8H836.8V829.4H837.4L839.4 800L841.6 818.5H842.3L844.3 802.2L846.5 819.1H847.2L849.2 805.9L851.4 820.2H852.1L854.1 811.1L856.3 821.8H857L859 817.9L861.2 823.8H861.9V826.4H866.8V826.4H871.7V826.4H879.2V817.5H880.9V827.4H884.1V812.1H885.8V827.4H889V807.6H890.7V827.4H893.9V802.3H895.6V827.4H898.8V800H900.5V827.4H903.7V793.4H905.4V827.4H908.6V789.4H910.3V827.4H913.5V786.1H915.2V827.4H918.4V783.1H920.1V827.4H923.3V775.8H925V827.4H928.2V774.2H929.9V827.4H933.1V768H934.8V827.4H938V766.1H939.7V827.4H942.9V761.9H944.6V827.4H947.8V755.5H949.5V827.4H952.7V753.2H954.4V827.4H955V825.9H959.9V825.9H964.8V825.9H969.7V825.9H974.6V825.9H979.5V825.9H984.4V825.9H989.3V825.9H996.8V841.4H998.5V829.4H1001.7V845.6H1003.4V829.4H1006.6V846H1008.3V829.4H1011.5V852.7H1013.2V829.4H1016.4V856.6H1018.1V829.4H1021.3V860H1023V829.4H1026.2V862.1H1027.9V829.4H1031.1V863.5H1032.8V829.4H1036V867.1H1037.7V829.4H1040.9V871.1H1042.6V829.4H1045.8V873.5H1047.5V829.4H1050.7V877.2H1052.4V829.4H1055.6V883.1H1057.3V829.4H1060.5V887.1H1062.2V829.4H1065.4V887.6H1067.1V829.4H1070.3V891.8H1072V829.4H1072.6L1074.6 799.6L1076.8 818.4H1077.5L1079.5 801.2L1081.7 818.8H1082.4L1084.4 804.3L1086.6 819.8H1087.3L1089.3 809L1091.5 821.2H1092.2L1094.2 815.2L1096.4 823H1097.1L1099.1 823L1101.3 825.4H1102V826.4H1106.9V826.4H1111.8V826.4H1119.3V811.2H1121V827.4H1124.2V810.3H1125.9V827.4H1129.1V802.7H1130.8V827.4H1134V801.5H1135.7V827.4H1138.9V796.7H1140.6V827.4H1143.8V790.6H1145.5V827.4H1148.7V786.4H1150.4V827.4H1153.6V783.7H1155.3V827.4H1158.5V781H1160.2V827.4H1163.4V775.1H1165.1V827.4H1168.3V771.3H1170V827.4H1173.2V764.9H1174.9V827.4H1178.1V763.6H1179.8V827.4H1183V758.7H1184.7V827.4H1187.9V752.3H1189.6V827.4H1192.8V751.6H1194.5V827.4H1195.1V825.9H1200V825.9H1204.9V825.9H1209.8V825.9H1214.7V825.9H1219.6V825.9H1224.5V825.9H1232V840.7H1233.7V829.4H1236.9V842.1H1238.6V829.4H1241.8V845H1243.5V829.4H1246.7V850.7H1248.4V829.4H1251.6V854.4H1253.3V829.4H1256.5V855.1H1258.2V829.4H1261.4V859.9H1263.1V829.4H1266.3V864.8H1268V829.4H1271.2V866.5H1272.9V829.4H1276.1V871.5H1277.8V829.4H1281V875.1H1282.7V829.4H1285.9V879.7H1287.6V829.4H1290.8V880.1H1292.5V829.4H1295.7V882.9H1297.4V829.4H1300.6V887.5H1302.3V829.4H1305.5V889.7H1307.2V829.4H1307.8L1309.8 799.4L1312 818.3H1312.7L1314.7 800.4L1316.9 818.6H1317.6L1319.6 803L1321.8 819.4H1322.5L1324.5 807.1L1326.7 820.6H1327.4L1329.4 812.8L1331.6 822.3H1332.3L1334.3 819.9L1336.5 824.5H1337.2V826.4H1342.1V826.4H1347V826.4H1354.5V812.9H1356.2V827.4H1359.4V811.6H1361.1V827.4H1364.3V804.9H1366V827.4H1369.2V800.9H1370.9V827.4H1374.1V796.4H1375.8V827.4H1379V792.4H1380.7V827.4H1383.9V788.8H1385.6V827.4H1388.8V785.7H1390.5V827.4H1393.7V781.5H1395.4V827.4H1398.6V777.1H1400.3V827.4H1403.5V771.2H1405.2V827.4H1408.4V769.8H1410.1V827.4H1413.3V765.1H1415V827.4H1418.2V758.7H1419.9V827.4H1423.1V756.5H1424.8V827.4H1428V753H1429.7V827.4H1430.3V825.9H1435.2V825.9H1440.1V825.9H1445V825.9H1449.9V825.9H1454.8V825.9H1459.7V825.9H1464.6V825.9H1472.1V843.5H1473.8V829.4H1477V845.3H1478.7V829.4H1481.9V847.9H1483.6V829.4H1486.8V852.4H1488.5V829.4H1491.7V856.8H1493.4V829.4H1496.6V859.5H1498.3V829.4H1501.5V862.1H1503.2V829.4H1506.4V865.4H1508.1V829.4H1511.3V868.5H1513V829.4H1516.2V871.6H1517.9V829.4H1521.1V875.8H1522.8V829.4H1526V881.4H1527.7V829.4H1530.9V882H1532.6V829.4H1535.8V887.6H1537.5V829.4H1540.7V890H1542.4V829.4H1545.6V894.2H1547.3V829.4H1547.9L1549.9 799.9L1552.1 818.4H1552.8L1554.8 801.9L1557 819H1557.7L1559.7 805.4L1561.9 820.1H1562.6L1564.6 810.5L1566.8 821.6H1567.5L1569.5 817.1L1571.7 823.6H1572.4V826.4H1577.3V826.4H1582.2V826.4H1589.7V816.5H1591.4V827.4H1594.6V809.9H1596.3V827.4H1599.5V807.6H1601.2V827.4H1604.4V804.5H1606.1V827.4H1609.3V798H1611V827.4H1614.2V794.4H1615.9V827.4H1588" stroke="#3030e4" stroke-width="0.9" opacity="0.75"/><path d="M783.3 829.4L784 930.8L785.4 928.8L786 829.4M788.2 829.4L788.9 930.6L790.3 928.6L790.9 829.4M793.1 829.4L793.8 929L795.2 927L795.8 829.4M798 829.4L798.7 930.7L800.1 928.7L800.7 829.4M802.9 829.4L803.6 930.2L805 928.2L805.6 829.4M807.8 829.4L808.5 932.3L809.9 930.3L810.5 829.4M812.7 829.4L813.4 933.7L814.8 931.7L815.4 829.4M817.6 829.4L818.3 934L819.7 932L820.3 829.4M822.5 829.4L823.2 931.6L824.6 929.6L825.2 829.4M827.4 829.4L828.1 933.1L829.5 931.1L830.1 829.4M832.3 829.4L833 935.1L834.4 933.1L835 829.4M876.4 827.4L877.1 717.3L878.5 719.3L879.1 827.4M881.3 827.4L882 716L883.4 718L884 827.4M886.2 827.4L886.9 715.7L888.3 717.7L888.9 827.4M891.1 827.4L891.8 714.7L893.2 716.7L893.8 827.4M896 827.4L896.7 716.6L898.1 718.6L898.7 827.4M900.9 827.4L901.6 714.2L903 716.2L903.6 827.4M905.8 827.4L906.5 714.4L907.9 716.4L908.5 827.4M910.7 827.4L911.4 715.4L912.8 717.4L913.4 827.4M915.6 827.4L916.3 716.6L917.7 718.6L918.3 827.4M920.5 827.4L921.2 713.5L922.6 715.5L923.2 827.4M925.4 827.4L926.1 716.2L927.5 718.2L928.1 827.4M930.3 827.4L931 714.1L932.4 716.1L933 827.4M935.2 827.4L935.9 716.5L937.3 718.5L937.9 827.4M940.1 827.4L940.8 716.5L942.2 718.5L942.8 827.4M945 827.4L945.7 714.4L947.1 716.4L947.7 827.4M949.9 827.4L950.6 716.2L952 718.2L952.6 827.4M994 829.4L994.7 928L996.1 926L996.7 829.4M998.9 829.4L999.6 929.2L1001 927.2L1001.6 829.4M1003.8 829.4L1004.5 926.6L1005.9 924.6L1006.5 829.4M1008.7 829.4L1009.4 930.3L1010.8 928.3L1011.4 829.4M1013.6 829.4L1014.3 931.1L1015.7 929.1L1016.3 829.4M1018.5 829.4L1019.2 931.6L1020.6 929.6L1021.2 829.4M1023.4 829.4L1024.1 930.7L1025.5 928.7L1026.1 829.4M1028.3 829.4L1029 929.1L1030.4 927.1L1031 829.4M1033.2 829.4L1033.9 929.6L1035.3 927.6L1035.9 829.4M1038.1 829.4L1038.8 930.6L1040.2 928.6L1040.8 829.4M1043 829.4L1043.7 930L1045.1 928L1045.7 829.4M1047.9 829.4L1048.6 930.7L1050 928.7L1050.6 829.4M1052.8 829.4L1053.5 933.6L1054.9 931.6L1055.5 829.4M1057.7 829.4L1058.4 934.6L1059.8 932.6L1060.4 829.4M1062.6 829.4L1063.3 932L1064.7 930L1065.3 829.4M1067.5 829.4L1068.2 933.2L1069.6 931.2L1070.2 829.4M1116.5 827.4L1117.2 713.6L1118.6 715.6L1119.2 827.4M1121.4 827.4L1122.1 716.9L1123.5 718.9L1124.1 827.4M1126.3 827.4L1127 713.5L1128.4 715.5L1129 827.4M1131.2 827.4L1131.9 716.6L1133.3 718.6L1133.9 827.4M1136.1 827.4L1136.8 716L1138.2 718L1138.8 827.4M1141 827.4L1141.7 714.1L1143.1 716.1L1143.7 827.4M1145.9 827.4L1146.6 714.1L1148 716.1L1148.6 827.4M1150.8 827.4L1151.5 715.7L1152.9 717.7L1153.5 827.4M1155.7 827.4L1156.4 717.2L1157.8 719.2L1158.4 827.4M1160.6 827.4L1161.3 715.5L1162.7 717.5L1163.3 827.4M1165.5 827.4L1166.2 715.9L1167.6 717.9L1168.2 827.4M1170.4 827.4L1171.1 713.7L1172.5 715.7L1173.1 827.4M1175.3 827.4L1176 716.6L1177.4 718.6L1178 827.4M1180.2 827.4L1180.9 715.9L1182.3 717.9L1182.9 827.4M1185.1 827.4L1185.8 713.8L1187.2 715.8L1187.8 827.4M1190 827.4L1190.7 717.3L1192.1 719.3L1192.7 827.4M1229.2 829.4L1229.9 928.4L1231.3 926.4L1231.9 829.4M1234.1 829.4L1234.8 926.9L1236.2 924.9L1236.8 829.4M1239 829.4L1239.7 926.7L1241.1 924.7L1241.7 829.4M1243.9 829.4L1244.6 929.4L1246 927.4L1246.6 829.4M1248.8 829.4L1249.5 930.1L1250.9 928.1L1251.5 829.4M1253.7 829.4L1254.4 927.8L1255.8 925.8L1256.4 829.4M1258.6 829.4L1259.3 929.6L1260.7 927.6L1261.3 829.4M1263.5 829.4L1264.2 931.5L1265.6 929.5L1266.2 829.4M1268.4 829.4L1269.1 930.1L1270.5 928.1L1271.1 829.4M1273.3 829.4L1274 932.1L1275.4 930.1L1276 829.4M1278.2 829.4L1278.9 932.7L1280.3 930.7L1280.9 829.4M1283.1 829.4L1283.8 934.3L1285.2 932.3L1285.8 829.4M1288 829.4L1288.7 931.7L1290.1 929.7L1290.7 829.4M1292.9 829.4L1293.6 931.5L1295 929.5L1295.6 829.4M1297.8 829.4L1298.5 933.1L1299.9 931.1L1300.5 829.4M1302.7 829.4L1303.4 932.3L1304.8 930.3L1305.4 829.4M1351.7 827.4L1352.4 713.7L1353.8 715.7L1354.4 827.4M1356.6 827.4L1357.3 716.7L1358.7 718.7L1359.3 827.4M1361.5 827.4L1362.2 714.2L1363.6 716.2L1364.2 827.4M1366.4 827.4L1367.1 714.4L1368.5 716.4L1369.1 827.4M1371.3 827.4L1372 714.1L1373.4 716.1L1374 827.4M1376.2 827.4L1376.9 714.3L1378.3 716.3L1378.9 827.4M1381.1 827.4L1381.8 715L1383.2 717L1383.8 827.4M1386 827.4L1386.7 716.1L1388.1 718.1L1388.7 827.4M1390.9 827.4L1391.6 716.1L1393 718.1L1393.6 827.4M1395.8 827.4L1396.5 716L1397.9 718L1398.5 827.4M1400.7 827.4L1401.4 714.3L1402.8 716.3L1403.4 827.4M1405.6 827.4L1406.3 717.1L1407.7 719.1L1408.3 827.4M1410.5 827.4L1411.2 716.6L1412.6 718.6L1413.2 827.4M1415.4 827.4L1416.1 714.4L1417.5 716.4L1418.1 827.4M1420.3 827.4L1421 716.4L1422.4 718.4L1423 827.4M1425.2 827.4L1425.9 717.1L1427.3 719.1L1427.9 827.4M1469.3 829.4L1470 929.3L1471.4 927.3L1472 829.4M1474.2 829.4L1474.9 928.2L1476.3 926.2L1476.9 829.4M1479.1 829.4L1479.8 927.8L1481.2 925.8L1481.8 829.4M1484 829.4L1484.7 929.2L1486.1 927.2L1486.7 829.4M1488.9 829.4L1489.6 930.5L1491 928.5L1491.6 829.4M1493.8 829.4L1494.5 930.2L1495.9 928.2L1496.5 829.4M1498.7 829.4L1499.4 929.9L1500.8 927.9L1501.4 829.4M1503.6 829.4L1504.3 930.1L1505.7 928.1L1506.3 829.4M1508.5 829.4L1509.2 930.2L1510.6 928.2L1511.2 829.4M1513.4 829.4L1514.1 930.3L1515.5 928.3L1516.1 829.4M1518.3 829.4L1519 931.5L1520.4 929.5L1521 829.4M1523.2 829.4L1523.9 934.1L1525.3 932.1L1525.9 829.4M1528.1 829.4L1528.8 931.6L1530.2 929.6L1530.8 829.4M1533 829.4L1533.7 934.3L1535.1 932.3L1535.7 829.4M1537.9 829.4L1538.6 933.6L1540 931.6L1540.6 829.4M1542.8 829.4L1543.5 934.8L1544.9 932.8L1545.5 829.4M1586.9 827.4L1587.6 715.8L1589 717.8L1589.6 827.4M1591.8 827.4L1592.5 713.4L1593.9 715.4L1594.5 827.4M1596.7 827.4L1597.4 715.4L1598.8 717.4L1599.4 827.4M1601.6 827.4L1602.3 716.5L1603.7 718.5L1604.3 827.4M1606.5 827.4L1607.2 714.2L1608.6 716.2L1609.2 827.4M1611.4 827.4L1612.1 714.8L1613.5 716.8L1614.1 827.4" stroke="#3030e4" stroke-width="1.0"/><path d="M-311 827.4L-293 816.2L-273 796.4L-253 774.7L-235 765.4L-230 768.5L-229 799.5L-211 808.8L-193 821.2L-193 827.4ZM-192 827.4L-174 838.6L-154 858.4L-134 880.1L-116 889.4L-111 886.3L-110 855.3L-92 846L-74 833.6L-74 827.4ZM-74 827.4L-56 816.2L-36 796.4L-16 774.7L2 765.4L7 768.5L8 799.5L26 808.8L44 821.2L44 827.4ZM45 827.4L63 838.6L83 858.4L103 880.1L121 889.4L126 886.3L127 855.3L145 846L163 833.6L163 827.4ZM163 827.4L181 816.2L201 796.4L221 774.7L239 765.4L244 768.5L245 799.5L263 808.8L281 821.2L281 827.4ZM282 827.4L300 838.6L320 858.4L340 880.1L358 889.4L363 886.3L364 855.3L382 846L400 833.6L400 827.4ZM400 827.4L418 816.2L438 796.4L458 774.7L476 765.4L481 768.5L482 799.5L500 808.8L518 821.2L518 827.4ZM519 827.4L537 838.6L557 858.4L577 880.1L595 889.4L600 886.3L601 855.3L619 846L637 833.6L637 827.4ZM637 827.4L655 816.2L675 796.4L695 774.7L713 765.4L718 768.5L719 799.5L737 808.8L755 821.2L755 827.4ZM756 827.4L774 838.6L794 858.4L814 880.1L832 889.4L837 886.3L838 855.3L856 846L874 833.6L874 827.4ZM874 827.4L892 816.2L912 796.4L932 774.7L950 765.4L955 768.5L956 799.5L974 808.8L992 821.2L992 827.4ZM993 827.4L1011 838.6L1031 858.4L1051 880.1L1069 889.4L1074 886.3L1075 855.3L1093 846L1111 833.6L1111 827.4ZM1111 827.4L1129 816.2L1149 796.4L1169 774.7L1187 765.4L1192 768.5L1193 799.5L1211 808.8L1229 821.2L1229 827.4ZM1230 827.4L1248 838.6L1268 858.4L1288 880.1L1306 889.4L1311 886.3L1312 855.3L1330 846L1348 833.6L1348 827.4ZM1348 827.4L1366 816.2L1386 796.4L1406 774.7L1424 765.4L1429 768.5L1430 799.5L1448 808.8L1466 821.2L1466 827.4ZM1467 827.4L1485 838.6L1505 858.4L1525 880.1L1543 889.4L1548 886.3L1549 855.3L1567 846L1585 833.6L1585 827.4ZM1585 827.4L1603 816.2L1623 796.4L1643 774.7L1661 765.4L1666 768.5L1667 799.5L1685 808.8L1703 821.2L1703 827.4ZM1704 827.4L1722 838.6L1742 858.4L1762 880.1L1780 889.4L1785 886.3L1786 855.3L1804 846L1822 833.6L1822 827.4Z" fill="#8c2aa0" stroke="none" opacity="0.36"/><path d="M778 827.4H781V826.4H782.6V821.4H785.9V826.4H787.5V821.4H790.8V826.4H792.4V821.4H795.7V826.4H797.3V821.4H800.6V826.4H802.2V820.4H805.5V826.4H807.1V820.4H810.4V826.4H812V820.4H815.3V826.4H816.9V820.4H820.2V826.4H821.8V820.4H825.1V826.4H826.7V820.4H830V826.4H831.6V820.4H834.9V826.4H836.5V822.7H839.8V826.4H841.4V820.9H844.7V826.4H846.3V819.1H849.6V826.4H851.2V817.3H854.5V826.4H856.1V815.5H859.4V826.4H861V813.7H864.3V826.4H865.9V811.9H869.2V826.4H870.8V810.2H874.1V807.3H876.9V832.4H879V804.8H881.8V832.4H883.9V802.2H886.7V832.4H888.8V799.6H891.6V832.4H893.7V797H896.5V832.4H898.6V794.5H901.4V832.4H903.5V791.9H906.3V832.4H908.4V789.3H911.2V832.4H913.3V832.4H918.2V832.4H923.1V832.4H928V832.4H932.9V832.4H937.8V832.4H942.7V832.4H947.6V832.4H952.5V832.4H957.4V820.4H962.3V820.4H967.2V820.4H972.1V820.4H977V820.4H981.9V820.4H986.8V820.4H991.7V820.4H996.6V826.4H998.2V821.4H1001.5V826.4H1003.1V821.4H1006.4V826.4H1008V821.4H1011.3V826.4H1012.9V821.4H1016.2V826.4H1017.8V821.4H1021.1V826.4H1022.7V821.4H1026V826.4H1027.6V821.4H1030.9V826.4H1032.5V821.4H1035.8V826.4H1037.4V820.4H1040.7V826.4H1042.3V820.4H1045.6V826.4H1047.2V820.4H1050.5V826.4H1052.1V820.4H1055.4V826.4H1057V820.4H1060.3V826.4H1061.9V820.4H1065.2V826.4H1066.8V820.4H1070.1V826.4H1071.7V823.4H1075V826.4H1076.6V821.6H1079.9V826.4H1081.5V819.8H1084.8V826.4H1086.4V818H1089.7V826.4H1091.3V816.2H1094.6V826.4H1096.2V814.4H1099.5V826.4H1101.1V812.6H1104.4V826.4H1106V810.8H1109.3V826.4H1110.9V809H1114.2V805.7H1117V832.4H1119.1V803.1H1121.9V832.4H1124V800.6H1126.8V832.4H1128.9V798H1131.7V832.4H1133.8V795.4H1136.6V832.4H1138.7V792.8H1141.5V832.4H1143.6V790.2H1146.4V832.4H1148.5V787.7H1151.3V832.4H1153.4V832.4H1158.3V832.4H1163.2V832.4H1168.1V832.4H1173V832.4H1177.9V832.4H1182.8V832.4H1187.7V832.4H1192.6V820.4H1197.5V820.4H1202.4V820.4H1207.3V820.4H1212.2V820.4H1217.1V820.4H1222V820.4H1226.9V820.4H1231.8V826.4H1233.4V821.4H1236.7V826.4H1238.3V821.4H1241.6V826.4H1243.2V821.4H1246.5V826.4H1248.1V821.4H1251.4V826.4H1253V821.4H1256.3V826.4H1257.9V821.4H1261.2V826.4H1262.8V821.4H1266.1V826.4H1267.7V821.4H1271V826.4H1272.6V820.4H1275.9V826.4H1277.5V820.4H1280.8V826.4H1282.4V820.4H1285.7V826.4H1287.3V820.4H1290.6V826.4H1292.2V820.4H1295.5V826.4H1297.1V820.4H1300.4V826.4H1302V820.4H1305.3V826.4H1306.9V820.4H1310.2V826.4H1311.8V822.2H1315.1V826.4H1316.7V820.4H1320V826.4H1321.6V818.6H1324.9V826.4H1326.5V816.9H1329.8V826.4H1331.4V815.1H1334.7V826.4H1336.3V813.3H1339.6V826.4H1341.2V811.5H1344.5V826.4H1346.1V809.7H1349.4V806.7H1352.2V832.4H1354.3V804.1H1357.1V832.4H1359.2V801.5H1362V832.4H1364.1V798.9H1366.9V832.4H1369V796.3H1371.8V832.4H1373.9V793.8H1376.7V832.4H1378.8V791.2H1381.6V832.4H1383.7V788.6H1386.5V832.4H1388.6V832.4H1393.5V832.4H1398.4V832.4H1403.3V832.4H1408.2V832.4H1413.1V832.4H1418V832.4H1422.9V832.4H1427.8V832.4H1432.7V820.4H1437.6V820.4H1442.5V820.4H1447.4V820.4H1452.3V820.4H1457.2V820.4H1462.1V820.4H1467V826.4H1468.6V821.4H1471.9V826.4H1473.5V821.4H1476.8V826.4H1478.4V821.4H1481.7V826.4H1483.3V821.4H1486.6V826.4H1488.2V821.4H1491.5V826.4H1493.1V821.4H1496.4V826.4H1498V821.4H1501.3V826.4H1502.9V821.4H1506.2V826.4H1507.8V821.4H1511.1V826.4H1512.7V820.4H1516V826.4H1517.6V820.4H1520.9V826.4H1522.5V820.4H1525.8V826.4H1527.4V820.4H1530.7V826.4H1532.3V820.4H1535.6V826.4H1537.2V820.4H1540.5V826.4H1542.1V820.4H1545.4V826.4H1547V822.9H1550.3V826.4H1551.9V821.1H1555.2V826.4H1556.8V819.3H1560.1V826.4H1561.7V817.5H1565V826.4H1566.6V815.7H1569.9V826.4H1571.5V813.9H1574.8V826.4H1576.4V812.1H1579.7V826.4H1581.3V810.3H1584.6V826.4H1586.2V808.5H1589.5V805H1592.3V832.4H1594.4V802.5H1597.2V832.4H1599.3V799.9H1602.1V832.4H1604.2V797.3H1607V832.4H1609.1V794.7H1611.9V832.4H1588" stroke="#ff2c4c" stroke-width="0.9" opacity="0.85"/><path d="M781.8 821.4V865.1M786.7 821.4V865.1M791.6 821.4V868.9M796.5 821.4V872.6M801.4 820.4V923.9M806.3 820.4V923.7M811.2 820.4V926.3M816.1 820.4V925.5M821 820.4V926M825.9 820.4V925.8M830.8 820.4V923.5M835.7 822.7V897.1M840.6 820.9V895.7M845.5 819.1V896.6M850.4 817.3V893.9M855.3 815.5V893.4M860.2 813.7V891.5M865.1 811.9V886.7M870 810.2V881.2M914.1 727.1V832.4M919 726.9V832.4M923.9 728.3V832.4M928.8 728.9V832.4M933.7 727.9V832.4M938.6 726.9V832.4M943.5 728.3V832.4M948.4 728V832.4M953.3 728.3V832.4M958.2 754.6V820.4M963.1 756V820.4M968 758.6V820.4M972.9 760.2V820.4M977.8 761.8V820.4M982.7 764.9V820.4M987.6 769.8V820.4M992.5 782.9V820.4M997.4 821.4V850.9M1002.3 821.4V855.2M1007.2 821.4V857M1012.1 821.4V859.3M1017 821.4V862.1M1021.9 821.4V866.7M1026.8 821.4V867.5M1031.7 821.4V870.9M1036.6 820.4V925.3M1041.5 820.4V925.2M1046.4 820.4V923.8M1051.3 820.4V923.4M1056.2 820.4V925.3M1061.1 820.4V925.8M1066 820.4V924.2M1070.9 823.4V898.3M1075.8 821.6V898.7M1080.7 819.8V895.4M1085.6 818V895.7M1090.5 816.2V893M1095.4 814.4V892.1M1100.3 812.6V887.7M1105.2 810.8V884.8M1110.1 809V878.4M1154.2 728.5V832.4M1159.1 728.1V832.4M1164 727.3V832.4M1168.9 726.1V832.4M1173.8 728.6V832.4M1178.7 727.4V832.4M1183.6 726.5V832.4M1188.5 726V832.4M1193.4 756.3V820.4M1198.3 757V820.4M1203.2 755.5V820.4M1208.1 756.9V820.4M1213 760.6V820.4M1217.9 764.9V820.4M1222.8 766.8V820.4M1227.7 775.9V820.4M1232.6 821.4V852.1M1237.5 821.4V854M1242.4 821.4V857.3M1247.3 821.4V858M1252.2 821.4V862.5M1257.1 821.4V863.5M1262 821.4V866.7M1266.9 821.4V870.8M1271.8 820.4V923.9M1276.7 820.4V925.9M1281.6 820.4V925.7M1286.5 820.4V925.2M1291.4 820.4V924.8M1296.3 820.4V925.2M1301.2 820.4V926M1306.1 820.4V925.7M1311 822.2V896.6M1315.9 820.4V895.7M1320.8 818.6V897.3M1325.7 816.9V894.4M1330.6 815.1V891.9M1335.5 813.3V891.4M1340.4 811.5V885.4M1345.3 809.7V881.9M1389.4 727.6V832.4M1394.3 727.6V832.4M1399.2 728.8V832.4M1404.1 727V832.4M1409 727.4V832.4M1413.9 728.2V832.4M1418.8 726.6V832.4M1423.7 726.6V832.4M1428.6 727.5V832.4M1433.5 756.6V820.4M1438.4 756.5V820.4M1443.3 758.8V820.4M1448.2 760.7V820.4M1453.1 762.5V820.4M1458 767.4V820.4M1462.9 772.3V820.4M1467.8 821.4V850M1472.7 821.4V851.3M1477.6 821.4V855.7M1482.5 821.4V856.7M1487.4 821.4V861.4M1492.3 821.4V864.2M1497.2 821.4V866.1M1502.1 821.4V867.4M1507 821.4V871.4M1511.9 820.4V925.3M1516.8 820.4V923.5M1521.7 820.4V926M1526.6 820.4V923.8M1531.5 820.4V923.4M1536.4 820.4V924.2M1541.3 820.4V924M1546.2 822.9V898.3M1551.1 821.1V895.6M1556 819.3V896.4M1560.9 817.5V893.8M1565.8 815.7V892.2M1570.7 813.9V892.1M1575.6 812.1V887M1580.5 810.3V881.9M1585.4 808.5V874.6" stroke="#ff2c4c" stroke-width="1.9"/><path d="M834.5 827.4V720.4M992 827.4V937.4M1071.5 827.4V720.4M1229 827.4V937.4M1308.5 827.4V720.4M1466 827.4V937.4M1545.5 827.4V720.4" stroke="#ff2c4c" stroke-width="1.1"/><path d="M915.5 832.4V786.4H917.3V832.4M920.4 832.4V783.4H922.2V832.4M925.3 832.4V781.9H927.1V832.4M930.2 832.4V779.7H932V832.4M935.1 832.4V776H936.9V832.4M940 832.4V772.1H941.8V832.4M944.9 832.4V770.8H946.7V832.4M949.8 832.4V767.6H951.6V832.4M954.7 832.4V765.1H956.5V832.4M1155.6 832.4V785.9H1157.4V832.4M1160.5 832.4V782.7H1162.3V832.4M1165.4 832.4V779.2H1167.2V832.4M1170.3 832.4V775.2H1172.1V832.4M1175.2 832.4V774.9H1177V832.4M1180.1 832.4V770.9H1181.9V832.4M1185 832.4V767.2H1186.8V832.4M1189.9 832.4V763.9H1191.7V832.4M1390.8 832.4V786.1H1392.6V832.4M1395.7 832.4V783.3H1397.5V832.4M1400.6 832.4V781.7H1402.4V832.4M1405.5 832.4V777.2H1407.3V832.4M1410.4 832.4V774.7H1412.2V832.4M1415.3 832.4V772.7H1417.1V832.4M1420.2 832.4V768.3H1422V832.4M1425.1 832.4V765.5H1426.9V832.4M1430 832.4V763.6H1431.8V832.4" stroke="#ff2c4c" stroke-width="0.9" opacity="0.55"/></g><path d="M836 213.4H1585" stroke="#d0d0d0" stroke-width="1" stroke-dasharray="6 6" fill="none" opacity="0.6"/><path d="M836 522.6H1585" stroke="#d0d0d0" stroke-width="1" stroke-dasharray="6 6" fill="none" opacity="0.6"/><path d="M836 827.4H1585" stroke="#d0d0d0" stroke-width="1" stroke-dasharray="6 6" fill="none" opacity="0.6"/><path d="M1001.9 99V986" stroke="#d8d8d8" stroke-width="1.2" stroke-dasharray="7 4" fill="none"/><text x="1580" y="341.2" font-size="13.2" fill="#d99a55" text-anchor="end">-32 A</text><text x="1580" y="310.5" font-size="13.2" fill="#d99a55" text-anchor="end">-24 A</text><text x="1580" y="279.8" font-size="13.2" fill="#d99a55" text-anchor="end">-16 A</text><text x="1580" y="249.2" font-size="13.2" fill="#d99a55" text-anchor="end">-8 A</text><text x="1580" y="218.5" font-size="13.2" fill="#d99a55" text-anchor="end">0 A</text><text x="1580" y="187.8" font-size="13.2" fill="#d99a55" text-anchor="end">8 A</text><text x="1580" y="157.2" font-size="13.2" fill="#d99a55" text-anchor="end">16 A</text><text x="1580" y="126.5" font-size="13.2" fill="#d99a55" text-anchor="end">24 A</text><text x="1580" y="95.8" font-size="13.2" fill="#d99a55" text-anchor="end">32 A</text><text x="1580" y="649.9" font-size="13.2" fill="#a9bb45" text-anchor="end">-20 A</text><text x="1580" y="619.2" font-size="13.2" fill="#a9bb45" text-anchor="end">-15 A</text><text x="1580" y="588.5" font-size="13.2" fill="#a9bb45" text-anchor="end">-10 A</text><text x="1580" y="557.9" font-size="13.2" fill="#a9bb45" text-anchor="end">-5 A</text><text x="1580" y="527.2" font-size="13.2" fill="#a9bb45" text-anchor="end">0 A</text><text x="1580" y="496.5" font-size="13.2" fill="#a9bb45" text-anchor="end">5 A</text><text x="1580" y="465.9" font-size="13.2" fill="#a9bb45" text-anchor="end">10 A</text><text x="1580" y="435.2" font-size="13.2" fill="#a9bb45" text-anchor="end">15 A</text><text x="1580" y="404.5" font-size="13.2" fill="#a9bb45" text-anchor="end">20 A</text><text x="1580" y="954.3" font-size="13.2" fill="#e0505e" text-anchor="end">-7.6 V</text><text x="1580" y="923.6" font-size="13.2" fill="#e0505e" text-anchor="end">-5.7 V</text><text x="1580" y="892.9" font-size="13.2" fill="#e0505e" text-anchor="end">-3.8 V</text><text x="1580" y="862.3" font-size="13.2" fill="#e0505e" text-anchor="end">-1.9 V</text><text x="1580" y="831.6" font-size="13.2" fill="#e0505e" text-anchor="end">0 V</text><text x="1580" y="800.9" font-size="13.2" fill="#e0505e" text-anchor="end">1.9 V</text><text x="1580" y="770.3" font-size="13.2" fill="#e0505e" text-anchor="end">3.8 V</text><text x="1580" y="739.6" font-size="13.2" fill="#e0505e" text-anchor="end">5.7 V</text><text x="1580" y="708.9" font-size="13.2" fill="#e0505e" text-anchor="end">7.6 V</text><text x="844.3" y="361.2" font-size="13.2" fill="#c9c9c9" text-anchor="middle">-4 ms</text><text x="923.1" y="361.2" font-size="13.2" fill="#c9c9c9" text-anchor="middle">-2 ms</text><text x="1001.9" y="361.2" font-size="13.2" fill="#c9c9c9" text-anchor="middle">0 s</text><text x="1080.7" y="361.2" font-size="13.2" fill="#c9c9c9" text-anchor="middle">2 ms</text><text x="1159.5" y="361.2" font-size="13.2" fill="#c9c9c9" text-anchor="middle">4 ms</text><text x="1238.3" y="361.2" font-size="13.2" fill="#c9c9c9" text-anchor="middle">6 ms</text><text x="1317.1" y="361.2" font-size="13.2" fill="#c9c9c9" text-anchor="middle">8 ms</text><text x="1395.9" y="361.2" font-size="13.2" fill="#c9c9c9" text-anchor="middle">10 ms</text><text x="1474.7" y="361.2" font-size="13.2" fill="#c9c9c9" text-anchor="middle">12 ms</text><text x="1553.5" y="361.2" font-size="13.2" fill="#c9c9c9" text-anchor="middle">14 ms</text><text x="807.3" y="82.6" font-size="19" fill="#ff9a30">Phase 1</text><text x="802.7" y="391.2" font-size="19" fill="#a4d233">Phase 2</text><text x="805.3" y="704.3" font-size="19" fill="#f0406a">Phase 3</text><path d="M802.3 200.5H825.5L837.0 213.4L825.5 226.3H802.3Q800.3 226.3 800.3 224.3V202.5Q800.3 200.5 802.3 200.5Z" fill="#ff9a30" stroke="#ff9a30" stroke-width="1.2"/><text x="817.5" y="217.8" font-size="12.5" fill="#1a0a00" text-anchor="middle" letter-spacing="0.5">C 5</text><path d="M802.3 509.70000000000005H825.5L837.0 522.6L825.5 535.5H802.3Q800.3 535.5 800.3 533.5V511.70000000000005Q800.3 509.70000000000005 802.3 509.70000000000005Z" fill="#283010" stroke="#9fc030" stroke-width="1.2"/><text x="817.5" y="527.0" font-size="12.5" fill="#d6e070" text-anchor="middle" letter-spacing="0.5">C 4</text><path d="M802.3 815.7H825.5L837.0 828.6L825.5 841.5H802.3Q800.3 841.5 800.3 839.5V817.7Q800.3 815.7 802.3 815.7Z" fill="#3a1018" stroke="#e8506e" stroke-width="1.2"/><text x="817.5" y="833.0" font-size="12.5" fill="#ffffff" text-anchor="middle" letter-spacing="0.5">C 3</text><path d="M1563.9 213.5L1575.7 204V211.4H1585V215.6H1575.7V223Z" fill="#f8e832"/><path d="M1544 67.6H1575.5Q1578 67.6 1578 70.1V101Q1578 105.5 1574.8 102.3L1542 71.2Q1539.5 67.6 1544 67.6Z" fill="#5a5a5a"/><circle cx="1570.4" cy="75.2" r="4.3" fill="#666" stroke="#cfcfcf" stroke-width="1.6"/><path d="M1567.2 78.6L1560.2 85.4" stroke="#9fb2c2" stroke-width="2.4" stroke-linecap="round"/><polygon points="992.3,60 1011.7,60 1002.0,69.5" fill="#ff9420"/><path d="M993.3 71H1010.7V89.6H1005.104L1002.0 96.8L998.896 89.6H993.3Z" fill="#000" stroke="#ff9420" stroke-width="2" stroke-linejoin="miter"/><text x="1002.0" y="85.0" font-size="13" font-weight="700" fill="#ffe8d0" text-anchor="middle">T</text><polygon points="1121.7,34 1135.3,34 1128.5,38.6" fill="#ff9420"/><path d="M1122.7 43.3H1134.3V55.2H1130.676L1128.5 60.8L1126.324 55.2H1122.7Z" fill="#000" stroke="#ff9420" stroke-width="1.6" stroke-linejoin="miter"/><text x="1128.5" y="52.9" font-size="10" font-weight="700" fill="#ffe8d0" text-anchor="middle">T</text><path d="M1067 39H1060.7V54.6H1067M1316.3 39H1322.6V54.6H1316.3" stroke="#f0f0f0" stroke-width="1.5" fill="none"/></svg>
<div class="t" style="top:65.25px;font-size:15.3px;color:#f2f2f2;left:8.00px;transform-origin:0 0;transform:scaleX(1.193);">Voltage</div>
<div class="t" style="top:65.25px;font-size:15.3px;color:#f2f2f2;left:224.60px;transform-origin:0 0;transform:scaleX(1.176);">Current</div>
<div class="t" style="top:65.25px;font-size:15.3px;color:#f2f2f2;left:430.00px;transform-origin:0 0;transform:scaleX(1.014);">Phase</div>
<div class="t" style="top:65.25px;font-size:15.3px;color:#f2f2f2;left:563.00px;transform-origin:0 0;transform:scaleX(1.129);">Power Factor</div>
<div class="b" style="left:7.90px;top:95.70px;width:21.80px;height:15.80px;background:#fbe939;border-radius:3px;"></div>
<div class="t" style="top:95.75px;font-size:14px;color:#101010;left:18.80px;transform:translateX(-50%) ;">1</div>
<div class="t" style="top:95.90px;font-size:14.3px;color:#ee1a2e;left:34.40px;transform-origin:0 0;transform:scaleX(1.044);">Vxy: 2.1754V, ∠0.000°</div>
<div class="b" style="left:224.20px;top:95.70px;width:21.80px;height:15.80px;background:#ff9a35;border-radius:3px;"></div>
<div class="t" style="top:95.75px;font-size:14px;color:#101010;left:235.10px;transform:translateX(-50%) ;">5</div>
<div class="t" style="top:95.90px;font-size:14.3px;color:#ee1a2e;left:251.00px;transform-origin:0 0;transform:scaleX(1.046);">Ix: 7.2075A, ∠45.78°</div>
<div class="b" style="left:7.90px;top:124.20px;width:21.80px;height:15.80px;background:#3ccfd9;border-radius:3px;"></div>
<div class="t" style="top:124.25px;font-size:14px;color:#101010;left:18.80px;transform:translateX(-50%) ;">2</div>
<div class="t" style="top:123.80px;font-size:14.3px;color:#f3f31f;left:34.40px;transform-origin:0 0;transform:scaleX(1.055);">Vyz: 1.8652V, ∠112.8°</div>
<div class="b" style="left:224.20px;top:124.20px;width:21.80px;height:15.80px;background:#93d435;border-radius:3px;"></div>
<div class="t" style="top:124.25px;font-size:14px;color:#101010;left:235.10px;transform:translateX(-50%) ;">4</div>
<div class="t" style="top:123.80px;font-size:14.3px;color:#f3f31f;left:251.00px;transform-origin:0 0;transform:scaleX(1.046);">Iy: 5.3780A, ∠168.5°</div>
<div class="b" style="left:7.90px;top:153.30px;width:21.80px;height:15.80px;background:#f04068;border-radius:3px;"></div>
<div class="t" style="top:153.35px;font-size:14px;color:#101010;left:18.80px;transform:translateX(-50%) ;">3</div>
<div class="t" style="top:152.20px;font-size:14.3px;color:#1f9fe2;left:34.40px;transform-origin:0 0;transform:scaleX(1.034);">Vzx: 2.3085V, ∠-125.3°</div>
<div class="b" style="left:224.20px;top:153.30px;width:21.80px;height:15.80px;background:#3434d2;border-radius:3px;"></div>
<div class="t" style="top:153.35px;font-size:14px;color:#101010;left:235.10px;transform:translateX(-50%) ;">6</div>
<div class="t" style="top:152.20px;font-size:14.3px;color:#1f9fe2;left:251.00px;transform-origin:0 0;transform:scaleX(1.046);">Iz: 7.2460A, ∠-83.13°</div>
<div class="t" style="top:93.41px;font-size:14.4px;color:#ee1a2e;left:430.00px;transform-origin:0 0;transform:scaleX(1.032);">Vxy,Ix: 45.778°</div>
<div class="t" style="top:93.41px;font-size:14.4px;color:#ee1a2e;left:563.00px;transform-origin:0 0;transform:scaleX(1.004);">PF1: 697.44m</div>
<div class="t" style="top:120.31px;font-size:14.4px;color:#f3f31f;left:430.00px;transform-origin:0 0;transform:scaleX(1.027);">Vyz,Iy: 55.649°</div>
<div class="t" style="top:120.31px;font-size:14.4px;color:#f3f31f;left:563.00px;transform-origin:0 0;transform:scaleX(1.004);">PF2: 564.26m</div>
<div class="t" style="top:147.01px;font-size:14.4px;color:#1f9fe2;left:430.00px;transform-origin:0 0;transform:scaleX(1.021);">Vzx,Iz: 42.203°</div>
<div class="t" style="top:147.01px;font-size:14.4px;color:#1f9fe2;left:563.00px;transform-origin:0 0;transform:scaleX(1.004);">PF3: 740.77m</div>
<div class="b" style="left:1603.00px;top:31.00px;width:318.00px;height:957.00px;border:1px solid #5a5a5a;border-right:none;background:#2f2f2f;"></div>
<svg width="1920" height="1080"><path d="M1839.5 34V148M1607 154.5H1918" stroke="#555" stroke-width="1" fill="none"/><g fill="#b5b5b5"><circle cx="1595.7" cy="500.7" r="2"/><circle cx="1595.7" cy="509.4" r="2"/><circle cx="1595.7" cy="518.1" r="2"/></g></svg>
<div class="t" style="top:32.02px;font-size:16.4px;color:#f4f4f4;font-weight:700;left:1720.60px;transform:translateX(-50%) scaleX(0.977);">Add New...</div>
<div class="btn" style="left:1610.3px;top:56.7px;width:67.20000000000005px;height:38.599999999999994px;"></div>
<div class="t" style="top:68.31px;font-size:15.2px;color:#f4f4f4;left:1643.90px;transform:translateX(-50%) ;">Cursors</div>
<div class="btn" style="left:1687.5px;top:56.7px;width:67.20000000000005px;height:38.599999999999994px;"></div>
<div class="t" style="top:68.31px;font-size:15.2px;color:#f4f4f4;left:1721.10px;transform:translateX(-50%) scaleX(1.110);">Callout</div>
<div class="btn" style="left:1764px;top:56.7px;width:67.70000000000005px;height:38.599999999999994px;"></div>
<div class="t" style="top:58.91px;font-size:15.2px;color:#f4f4f4;left:1797.85px;transform:translateX(-50%) scaleX(0.993);">Results</div>
<div class="t" style="top:75.11px;font-size:15.2px;color:#f4f4f4;left:1797.85px;transform:translateX(-50%) scaleX(1.024);">Table</div>
<div class="btn" style="left:1848.3px;top:55.3px;width:67.5px;height:39.400000000000006px;"></div>
<div class="btn" style="left:1610.3px;top:105.3px;width:67.20000000000005px;height:38.89999999999999px;"></div>
<div class="t" style="top:117.06px;font-size:15.2px;color:#f4f4f4;left:1643.90px;transform:translateX(-50%) scaleX(1.066);">Measure</div>
<div class="btn" style="left:1687.5px;top:105.3px;width:67.20000000000005px;height:38.89999999999999px;"></div>
<div class="t" style="top:117.06px;font-size:15.2px;color:#f4f4f4;left:1721.10px;transform:translateX(-50%) scaleX(0.993);">Search</div>
<div class="btn" style="left:1764px;top:105.3px;width:67.70000000000005px;height:38.89999999999999px;"></div>
<div class="t" style="top:117.06px;font-size:15.2px;color:#f4f4f4;left:1797.85px;transform:translateX(-50%) scaleX(1.081);">Plot</div>
<div class="btn" style="left:1848.3px;top:104px;width:67.5px;height:39.30000000000001px;"></div>
<div class="t" style="top:115.96px;font-size:15.2px;color:#f4f4f4;left:1882.05px;transform:translateX(-50%) scaleX(1.094);">More...</div>
<svg width="1920" height="1080"><path d="M1869.5 63.6H1873.2M1876.0 63.6H1879.7M1883.4 63.6H1887.1M1890.4 63.6H1894.0M1869.5 82.1H1873.2M1876.0 82.1H1879.7M1883.4 82.1H1887.1M1870.8 68.3V71.8M1892.7 68.3V71.8M1870.8 74.5V77.8M1892.7 74.5V77.8" fill="none" stroke="#d2d2d2" stroke-width="2.6"/><circle cx="1883.7" cy="71.4" r="4.1" fill="#2c2c2c" stroke="#d0d0d0" stroke-width="1.7"/><path d="M1880.5 74.4L1876 77.9" stroke="#d8d8d8" stroke-width="2.7" stroke-linecap="round"/><path d="M1888 78.4L1895.6 83.6L1892.2 84.2L1893.9 87.4L1892.2 88.2L1890.6 85L1888.2 87.2Z" fill="#cfcfcf" stroke="#2c2c2c" stroke-width="0.5"/></svg>
<div class="b" style="left:1606.70px;top:165.30px;width:310.00px;height:247.70px;background:#c9c9c9;border-radius:5px;overflow:hidden;"><div style="position:absolute;left:0;top:0;right:0;height:20px;background:#5b5b5b;"></div></div>
<div class="t" style="top:167.09px;font-size:15.6px;color:#f4f4f4;left:1613.30px;transform-origin:0 0;transform:scaleX(1.075);">IMDA Meas 1: Power Quality'</div>
<div class="t" style="top:189.56px;font-size:15.4px;color:#0c0c0c;left:1712.50px;transform-origin:0 0;transform:scaleX(0.950);">Phase1</div>
<svg width="1920" height="1080"><defs><clipPath id="pc1714_211"><rect x="1714.0" y="211.3" width="57.2" height="15" rx="7.5"/></clipPath></defs><g clip-path="url(#pc1714_211)"><rect x="1714.0" y="211.3" width="57.2" height="15" fill="#fbe939"/><polygon points="1746.604,211.3 1771.2,211.3 1771.2,226.3 1736.88,226.3" fill="#ff9a35"/></g><rect x="1714.0" y="211.3" width="57.2" height="15" rx="7.5" fill="none" stroke="rgba(60,60,40,0.65)" stroke-width="1"/><path d="M1746.604 211.3L1736.88 226.3" stroke="rgba(40,40,30,0.7)" stroke-width="1"/><text x="1726.012" y="223.10000000000002" font-size="11.5" fill="#222" text-anchor="middle" font-family="Liberation Sans, sans-serif">1</text><text x="1757.472" y="223.10000000000002" font-size="11.5" fill="#3a1a00" text-anchor="middle" font-family="Liberation Sans, sans-serif">5</text></svg>
<div class="t" style="top:189.56px;font-size:15.4px;color:#0c0c0c;left:1781.70px;transform-origin:0 0;transform:scaleX(0.950);">Phase2</div>
<svg width="1920" height="1080"><defs><clipPath id="pc1782_211"><rect x="1782.5" y="211.3" width="57.2" height="15" rx="7.5"/></clipPath></defs><g clip-path="url(#pc1782_211)"><rect x="1782.5" y="211.3" width="57.2" height="15" fill="#2cc9d6"/><polygon points="1815.104,211.3 1839.7,211.3 1839.7,226.3 1805.38,226.3" fill="#8fd232"/></g><rect x="1782.5" y="211.3" width="57.2" height="15" rx="7.5" fill="none" stroke="rgba(60,60,40,0.65)" stroke-width="1"/><path d="M1815.104 211.3L1805.38 226.3" stroke="rgba(40,40,30,0.7)" stroke-width="1"/><text x="1794.512" y="223.10000000000002" font-size="11.5" fill="#033" text-anchor="middle" font-family="Liberation Sans, sans-serif">2</text><text x="1825.972" y="223.10000000000002" font-size="11.5" fill="#120" text-anchor="middle" font-family="Liberation Sans, sans-serif">4</text></svg>
<div class="t" style="top:189.56px;font-size:15.4px;color:#0c0c0c;left:1851.30px;transform-origin:0 0;transform:scaleX(0.950);">Phase3</div>
<svg width="1920" height="1080"><defs><clipPath id="pc1850_211"><rect x="1850.8" y="211.3" width="57.2" height="15" rx="7.5"/></clipPath></defs><g clip-path="url(#pc1850_211)"><rect x="1850.8" y="211.3" width="57.2" height="15" fill="#f04068"/><polygon points="1883.404,211.3 1908.0,211.3 1908.0,226.3 1873.68,226.3" fill="#2a2ad0"/></g><rect x="1850.8" y="211.3" width="57.2" height="15" rx="7.5" fill="none" stroke="rgba(60,60,40,0.65)" stroke-width="1"/><path d="M1883.404 211.3L1873.68 226.3" stroke="rgba(40,40,30,0.7)" stroke-width="1"/><text x="1862.812" y="223.10000000000002" font-size="11.5" fill="#ffd0d8" text-anchor="middle" font-family="Liberation Sans, sans-serif">3</text><text x="1894.272" y="223.10000000000002" font-size="11.5" fill="#d8d8ff" text-anchor="middle" font-family="Liberation Sans, sans-serif">6</text></svg>
<div class="t" style="top:229.56px;font-size:15.4px;color:#0c0c0c;left:1615.30px;">V<sub>RMS</sub>(V):</div>
<div class="t" style="top:229.56px;font-size:15.4px;color:#0c0c0c;left:1712.50px;">2.175</div>
<div class="t" style="top:229.56px;font-size:15.4px;color:#0c0c0c;left:1781.70px;">1.865</div>
<div class="t" style="top:229.56px;font-size:15.4px;color:#0c0c0c;left:1851.30px;">2.308</div>
<div class="t" style="top:249.56px;font-size:15.4px;color:#0c0c0c;left:1615.30px;">I<sub>RMS</sub>(A):</div>
<div class="t" style="top:249.56px;font-size:15.4px;color:#0c0c0c;left:1712.50px;">7.207</div>
<div class="t" style="top:249.56px;font-size:15.4px;color:#0c0c0c;left:1781.70px;">5.378</div>
<div class="t" style="top:249.56px;font-size:15.4px;color:#0c0c0c;left:1851.30px;">7.246</div>
<div class="t" style="top:269.56px;font-size:15.4px;color:#0c0c0c;left:1615.30px;">V CF:</div>
<div class="t" style="top:269.56px;font-size:15.4px;color:#0c0c0c;left:1712.50px;">2.665</div>
<div class="t" style="top:269.56px;font-size:15.4px;color:#0c0c0c;left:1781.70px;">3.216</div>
<div class="t" style="top:269.56px;font-size:15.4px;color:#0c0c0c;left:1851.30px;">2.767</div>
<div class="t" style="top:289.56px;font-size:15.4px;color:#0c0c0c;left:1615.30px;">I CF:</div>
<div class="t" style="top:289.56px;font-size:15.4px;color:#0c0c0c;left:1712.50px;">2.624</div>
<div class="t" style="top:289.56px;font-size:15.4px;color:#0c0c0c;left:1781.70px;">2.581</div>
<div class="t" style="top:289.56px;font-size:15.4px;color:#0c0c0c;left:1851.30px;">2.790</div>
<div class="t" style="top:309.56px;font-size:15.4px;color:#0c0c0c;left:1615.30px;">TrPwr(W):</div>
<div class="t" style="top:309.56px;font-size:15.4px;color:#0c0c0c;left:1712.50px;">4.790</div>
<div class="t" style="top:309.56px;font-size:15.4px;color:#0c0c0c;left:1781.70px;">3.136</div>
<div class="t" style="top:309.56px;font-size:15.4px;color:#0c0c0c;left:1851.30px;">5.454</div>
<div class="t" style="top:329.56px;font-size:15.4px;color:#0c0c0c;left:1615.30px;">RePwr(VAR):</div>
<div class="t" style="top:329.56px;font-size:15.4px;color:#0c0c0c;left:1712.50px;">14.93</div>
<div class="t" style="top:329.56px;font-size:15.4px;color:#0c0c0c;left:1781.70px;">9.528</div>
<div class="t" style="top:329.56px;font-size:15.4px;color:#0c0c0c;left:1851.30px;">15.81</div>
<div class="t" style="top:350.16px;font-size:15.4px;color:#0c0c0c;left:1615.30px;">ApPwr(VA):</div>
<div class="t" style="top:350.16px;font-size:15.4px;color:#0c0c0c;left:1712.50px;">15.68</div>
<div class="t" style="top:350.16px;font-size:15.4px;color:#0c0c0c;left:1781.70px;">10.03</div>
<div class="t" style="top:350.16px;font-size:15.4px;color:#0c0c0c;left:1851.30px;">16.73</div>
<div class="t" style="top:370.26px;font-size:15.4px;color:#0c0c0c;left:1615.30px;">PF:</div>
<div class="t" style="top:370.26px;font-size:15.4px;color:#0c0c0c;left:1712.50px;">697.4 m</div>
<div class="t" style="top:370.26px;font-size:15.4px;color:#0c0c0c;left:1781.70px;">564.3 m</div>
<div class="t" style="top:370.26px;font-size:15.4px;color:#0c0c0c;left:1851.30px;">740.8 m</div>
<div class="b" style="left:1606.70px;top:393.00px;width:310.00px;height:1.00px;background:#6a6a6a;"></div>
<div class="t" style="top:394.56px;font-size:15.4px;color:#0c0c0c;left:1615.30px;">Freq:</div>
<div class="t" style="top:394.56px;font-size:15.4px;color:#0c0c0c;left:1768.30px;">167.1 Hz</div>
<div class="b" style="left:1606.70px;top:418.30px;width:310.00px;height:207.70px;background:#c9c9c9;border-radius:5px;overflow:hidden;"><div style="position:absolute;left:0;top:0;right:0;height:20px;background:#5b5b5b;"></div></div>
<div class="t" style="top:420.09px;font-size:15.6px;color:#f4f4f4;left:1613.30px;transform-origin:0 0;transform:scaleX(1.060);">IMDA Meas 2: Harmonics'</div>
<div class="t" style="top:443.76px;font-size:15.4px;color:#0c0c0c;left:1712.50px;transform-origin:0 0;transform:scaleX(0.950);">Phase1</div>
<svg width="1920" height="1080"><defs><clipPath id="pc1714_464"><rect x="1714.0" y="464.7" width="57.2" height="15" rx="7.5"/></clipPath></defs><g clip-path="url(#pc1714_464)"><rect x="1714.0" y="464.7" width="57.2" height="15" fill="#fbe939"/><polygon points="1746.604,464.7 1771.2,464.7 1771.2,479.7 1736.88,479.7" fill="#ff9a35"/></g><rect x="1714.0" y="464.7" width="57.2" height="15" rx="7.5" fill="none" stroke="rgba(60,60,40,0.65)" stroke-width="1"/><path d="M1746.604 464.7L1736.88 479.7" stroke="rgba(40,40,30,0.7)" stroke-width="1"/><text x="1726.012" y="476.5" font-size="11.5" fill="#222" text-anchor="middle" font-family="Liberation Sans, sans-serif">1</text><text x="1757.472" y="476.5" font-size="11.5" fill="#3a1a00" text-anchor="middle" font-family="Liberation Sans, sans-serif">5</text></svg>
<div class="t" style="top:443.76px;font-size:15.4px;color:#0c0c0c;left:1781.70px;transform-origin:0 0;transform:scaleX(0.950);">Phase2</div>
<svg width="1920" height="1080"><defs><clipPath id="pc1782_464"><rect x="1782.5" y="464.7" width="57.2" height="15" rx="7.5"/></clipPath></defs><g clip-path="url(#pc1782_464)"><rect x="1782.5" y="464.7" width="57.2" height="15" fill="#2cc9d6"/><polygon points="1815.104,464.7 1839.7,464.7 1839.7,479.7 1805.38,479.7" fill="#8fd232"/></g><rect x="1782.5" y="464.7" width="57.2" height="15" rx="7.5" fill="none" stroke="rgba(60,60,40,0.65)" stroke-width="1"/><path d="M1815.104 464.7L1805.38 479.7" stroke="rgba(40,40,30,0.7)" stroke-width="1"/><text x="1794.512" y="476.5" font-size="11.5" fill="#033" text-anchor="middle" font-family="Liberation Sans, sans-serif">2</text><text x="1825.972" y="476.5" font-size="11.5" fill="#120" text-anchor="middle" font-family="Liberation Sans, sans-serif">4</text></svg>
<div class="t" style="top:443.76px;font-size:15.4px;color:#0c0c0c;left:1851.30px;transform-origin:0 0;transform:scaleX(0.950);">Phase3</div>
<svg width="1920" height="1080"><defs><clipPath id="pc1850_464"><rect x="1850.8" y="464.7" width="57.2" height="15" rx="7.5"/></clipPath></defs><g clip-path="url(#pc1850_464)"><rect x="1850.8" y="464.7" width="57.2" height="15" fill="#f04068"/><polygon points="1883.404,464.7 1908.0,464.7 1908.0,479.7 1873.68,479.7" fill="#2a2ad0"/></g><rect x="1850.8" y="464.7" width="57.2" height="15" rx="7.5" fill="none" stroke="rgba(60,60,40,0.65)" stroke-width="1"/><path d="M1883.404 464.7L1873.68 479.7" stroke="rgba(40,40,30,0.7)" stroke-width="1"/><text x="1862.812" y="476.5" font-size="11.5" fill="#ffd0d8" text-anchor="middle" font-family="Liberation Sans, sans-serif">3</text><text x="1894.272" y="476.5" font-size="11.5" fill="#d8d8ff" text-anchor="middle" font-family="Liberation Sans, sans-serif">6</text></svg>
<div class="t" style="top:482.86px;font-size:15.4px;color:#0c0c0c;left:1615.30px;">F<sub>1</sub> Mag(A):</div>
<div class="t" style="top:482.86px;font-size:15.4px;color:#0c0c0c;left:1712.50px;">5.191</div>
<div class="t" style="top:482.86px;font-size:15.4px;color:#0c0c0c;left:1781.70px;">4.006</div>
<div class="t" style="top:482.86px;font-size:15.4px;color:#0c0c0c;left:1851.30px;">5.298</div>
<div class="t" style="top:502.86px;font-size:15.4px;color:#0c0c0c;left:1615.30px;">F<sub>3</sub> Mag(A):</div>
<div class="t" style="top:502.86px;font-size:15.4px;color:#0c0c0c;left:1712.50px;">463.8 m</div>
<div class="t" style="top:502.86px;font-size:15.4px;color:#0c0c0c;left:1781.70px;">219.0 m</div>
<div class="t" style="top:502.86px;font-size:15.4px;color:#0c0c0c;left:1851.30px;">193.7 m</div>
<div class="t" style="top:523.16px;font-size:15.4px;color:#0c0c0c;left:1615.30px;">THD-F(%):</div>
<div class="t" style="top:523.16px;font-size:15.4px;color:#0c0c0c;left:1712.50px;">89.02</div>
<div class="t" style="top:523.16px;font-size:15.4px;color:#0c0c0c;left:1781.70px;">87.07</div>
<div class="t" style="top:523.16px;font-size:15.4px;color:#0c0c0c;left:1851.30px;">90.47</div>
<div class="t" style="top:542.96px;font-size:15.4px;color:#0c0c0c;left:1615.30px;">THD-R(%):</div>
<div class="t" style="top:542.96px;font-size:15.4px;color:#0c0c0c;left:1712.50px;">66.49</div>
<div class="t" style="top:542.96px;font-size:15.4px;color:#0c0c0c;left:1781.70px;">65.67</div>
<div class="t" style="top:542.96px;font-size:15.4px;color:#0c0c0c;left:1851.30px;">67.09</div>
<div class="t" style="top:563.26px;font-size:15.4px;color:#0c0c0c;left:1615.30px;">RMS(A):</div>
<div class="t" style="top:563.26px;font-size:15.4px;color:#0c0c0c;left:1712.50px;">7.207</div>
<div class="t" style="top:563.26px;font-size:15.4px;color:#0c0c0c;left:1781.70px;">5.378</div>
<div class="t" style="top:563.26px;font-size:15.4px;color:#0c0c0c;left:1851.30px;">7.246</div>
<div class="b" style="left:1606.70px;top:586.00px;width:310.00px;height:1.00px;background:#6a6a6a;"></div>
<div class="t" style="top:588.56px;font-size:15.4px;color:#0c0c0c;left:1615.30px;">Freq:</div>
<div class="t" style="top:588.56px;font-size:15.4px;color:#0c0c0c;left:1768.30px;">167.1 Hz</div>
<div class="t" style="top:608.36px;font-size:15.4px;color:#0c0c0c;left:1615.30px;">H<sub>COUNT</sub>:</div>
<div class="t" style="top:608.36px;font-size:15.4px;color:#0c0c0c;left:1768.30px;">50.00</div>
<div class="b" style="left:1606.70px;top:632.40px;width:310.00px;height:121.60px;background:#c9c9c9;border-radius:5px;overflow:hidden;"><div style="position:absolute;left:0;top:0;right:0;height:20px;background:#000;"></div></div>
<div class="t" style="top:634.19px;font-size:15.6px;color:#f4f4f4;left:1613.30px;transform-origin:0 0;transform:scaleX(1.058);">IMDA Meas 3: Phasor Diagram'</div>
<div class="t" style="top:656.46px;font-size:15.4px;color:#0c0c0c;left:1685.30px;transform-origin:0 0;transform:scaleX(0.950);">Phase1</div>
<svg width="1920" height="1080"><defs><clipPath id="pc1686_678"><rect x="1686.8" y="678.3" width="57.2" height="15" rx="7.5"/></clipPath></defs><g clip-path="url(#pc1686_678)"><rect x="1686.8" y="678.3" width="57.2" height="15" fill="#fbe939"/><polygon points="1719.404,678.3 1744.0,678.3 1744.0,693.3 1709.68,693.3" fill="#ff9a35"/></g><rect x="1686.8" y="678.3" width="57.2" height="15" rx="7.5" fill="none" stroke="rgba(60,60,40,0.65)" stroke-width="1"/><path d="M1719.404 678.3L1709.68 693.3" stroke="rgba(40,40,30,0.7)" stroke-width="1"/><text x="1698.812" y="690.0999999999999" font-size="11.5" fill="#222" text-anchor="middle" font-family="Liberation Sans, sans-serif">1</text><text x="1730.272" y="690.0999999999999" font-size="11.5" fill="#3a1a00" text-anchor="middle" font-family="Liberation Sans, sans-serif">5</text></svg>
<div class="t" style="top:656.46px;font-size:15.4px;color:#0c0c0c;left:1764.50px;transform-origin:0 0;transform:scaleX(0.950);">Phase2</div>
<svg width="1920" height="1080"><defs><clipPath id="pc1765_678"><rect x="1765.3" y="678.3" width="57.2" height="15" rx="7.5"/></clipPath></defs><g clip-path="url(#pc1765_678)"><rect x="1765.3" y="678.3" width="57.2" height="15" fill="#2cc9d6"/><polygon points="1797.904,678.3 1822.5,678.3 1822.5,693.3 1788.18,693.3" fill="#8fd232"/></g><rect x="1765.3" y="678.3" width="57.2" height="15" rx="7.5" fill="none" stroke="rgba(60,60,40,0.65)" stroke-width="1"/><path d="M1797.904 678.3L1788.18 693.3" stroke="rgba(40,40,30,0.7)" stroke-width="1"/><text x="1777.312" y="690.0999999999999" font-size="11.5" fill="#033" text-anchor="middle" font-family="Liberation Sans, sans-serif">2</text><text x="1808.772" y="690.0999999999999" font-size="11.5" fill="#120" text-anchor="middle" font-family="Liberation Sans, sans-serif">4</text></svg>
<div class="t" style="top:656.46px;font-size:15.4px;color:#0c0c0c;left:1843.70px;transform-origin:0 0;transform:scaleX(0.950);">Phase3</div>
<svg width="1920" height="1080"><defs><clipPath id="pc1843_678"><rect x="1843.2" y="678.3" width="57.2" height="15" rx="7.5"/></clipPath></defs><g clip-path="url(#pc1843_678)"><rect x="1843.2" y="678.3" width="57.2" height="15" fill="#f04068"/><polygon points="1875.804,678.3 1900.4,678.3 1900.4,693.3 1866.0800000000002,693.3" fill="#2a2ad0"/></g><rect x="1843.2" y="678.3" width="57.2" height="15" rx="7.5" fill="none" stroke="rgba(60,60,40,0.65)" stroke-width="1"/><path d="M1875.804 678.3L1866.0800000000002 693.3" stroke="rgba(40,40,30,0.7)" stroke-width="1"/><text x="1855.212" y="690.0999999999999" font-size="11.5" fill="#ffd0d8" text-anchor="middle" font-family="Liberation Sans, sans-serif">3</text><text x="1886.672" y="690.0999999999999" font-size="11.5" fill="#d8d8ff" text-anchor="middle" font-family="Liberation Sans, sans-serif">6</text></svg>
<div class="t" style="top:695.46px;font-size:15.4px;color:#0c0c0c;left:1615.30px;">V<sub>RMS</sub>(V):</div>
<div class="t" style="top:695.46px;font-size:15.4px;color:#0c0c0c;left:1685.30px;">2.175</div>
<div class="t" style="top:695.46px;font-size:15.4px;color:#0c0c0c;left:1764.50px;">1.865</div>
<div class="t" style="top:695.46px;font-size:15.4px;color:#0c0c0c;left:1843.70px;">2.308</div>
<div class="t" style="top:715.66px;font-size:15.4px;color:#0c0c0c;left:1615.30px;">I<sub>RMS</sub>(A):</div>
<div class="t" style="top:715.66px;font-size:15.4px;color:#0c0c0c;left:1685.30px;">7.207</div>
<div class="t" style="top:715.66px;font-size:15.4px;color:#0c0c0c;left:1764.50px;">5.378</div>
<div class="t" style="top:715.66px;font-size:15.4px;color:#0c0c0c;left:1843.70px;">7.246</div>
<div class="t" style="top:735.96px;font-size:15.4px;color:#0c0c0c;left:1615.30px;">Phase:</div>
<div class="t" style="top:735.96px;font-size:15.4px;color:#0c0c0c;left:1685.30px;">45.78 °</div>
<div class="t" style="top:735.96px;font-size:15.4px;color:#0c0c0c;left:1764.50px;">55.65 °</div>
<div class="t" style="top:735.96px;font-size:15.4px;color:#0c0c0c;left:1843.70px;">42.20 °</div>
<div class="btn" style="left:6px;top:995px;width:26px;height:78px;border-radius:6px;border-color:#464646;background:#2e2e2e;box-shadow:none;"></div>
<div class="btn" style="left:781.5px;top:995px;width:25.5px;height:77.5px;border-radius:6px;"></div>
<svg width="1920" height="1080"><path d="M23.4 1025.2L14.4 1034.3L23.4 1043.4" stroke="#bcbcbc" stroke-width="3.8" fill="none"/><path d="M789.4 1025L798.6 1034L789.4 1043" stroke="#c6c6c6" stroke-width="3.8" fill="none"/><path d="M946.5 992V1076M1106.4 992V1076M1225.6 992V1076M1802.5 992V1076" stroke="#555" stroke-width="1" fill="none"/></svg>
<div class="b" style="left:40.60px;top:992.00px;width:206.00px;height:92.00px;background:#ff9a35;border-radius:6px;"></div>
<div class="b" style="left:45.80px;top:993.00px;width:95.00px;height:84.00px;background:linear-gradient(#cdcdcd,#cdcdcd 95.5%,#b9c6cc 96.5%);border-radius:4px;overflow:hidden;border:1px solid rgba(20,20,20,0.55);"><div style="position:absolute;left:0;top:0;right:0;height:20px;background:#4e4a22;border-bottom:1.5px solid rgba(190,190,175,0.8);"></div></div>
<div class="t" style="top:994.99px;font-size:15.6px;color:#f3f336;left:52.80px;transform-origin:0 0;transform:scaleX(0.916);">Ch 1</div>
<div class="t" style="top:1019.16px;font-size:15.4px;color:#101010;left:53.70px;transform-origin:0 0;transform:scaleX(1.052);">2.1 V/div</div>
<div class="t" style="top:1039.16px;font-size:15.4px;color:#101010;left:53.70px;transform-origin:0 0;transform:scaleX(0.992);">Ter…</div>
<div class="t" style="top:1059.16px;font-size:15.4px;color:#101010;left:53.70px;transform-origin:0 0;transform:scaleX(1.031);">200 kHz</div>
<div class="t" style="top:1059.58px;font-size:9px;color:#101010;font-weight:700;left:124.00px;">B</div>
<div class="t" style="top:1063.83px;font-size:8px;color:#101010;font-weight:700;left:129.60px;">W</div>
<svg width="1920" height="1080"><path d="M119.3 1045.0c0.8 -4.6 2.3 -6.2 3.6 -5.2c1.9 1.6 1.5 9 3.8 10.2c1.6 0.7 2.8 -1 3.4 -5" stroke="#222" stroke-width="1.4" fill="none"/></svg>
<div class="b" style="left:147.00px;top:993.00px;width:94.70px;height:84.00px;background:linear-gradient(#cdcdcd,#cdcdcd 95.5%,#b9c6cc 96.5%);border-radius:4px;overflow:hidden;border:1px solid rgba(20,20,20,0.55);"><div style="position:absolute;left:0;top:0;right:0;height:20px;background:#ff9a35;border-bottom:1.5px solid rgba(190,190,175,0.8);"></div></div>
<div class="t" style="top:994.99px;font-size:15.6px;color:#1a0e00;left:154.00px;transform-origin:0 0;transform:scaleX(0.916);">Ch 5</div>
<div class="t" style="top:1019.16px;font-size:15.4px;color:#101010;left:154.90px;transform-origin:0 0;transform:scaleX(1.097);">8 A/div</div>
<div class="t" style="top:1039.16px;font-size:15.4px;color:#101010;left:154.90px;transform-origin:0 0;transform:scaleX(1.055);">1 MΩ</div>
<div class="t" style="top:1059.16px;font-size:15.4px;color:#101010;left:154.90px;transform-origin:0 0;transform:scaleX(1.031);">200 kHz</div>
<div class="t" style="top:1059.58px;font-size:9px;color:#101010;font-weight:700;left:225.20px;">B</div>
<div class="t" style="top:1063.83px;font-size:8px;color:#101010;font-weight:700;left:230.80px;">W</div>
<svg width="1920" height="1080"><path d="M203.0 1045.0c0.8 -4.6 2.3 -6.2 3.6 -5.2c1.9 1.6 1.5 9 3.8 10.2c1.6 0.7 2.8 -1 3.4 -5" stroke="#222" stroke-width="1.4" fill="none"/></svg>
<div class="b" style="left:252.20px;top:992.00px;width:207.20px;height:92.00px;background:#8fd42e;border-radius:6px;"></div>
<div class="b" style="left:257.60px;top:993.00px;width:95.10px;height:84.00px;background:linear-gradient(#cdcdcd,#cdcdcd 95.5%,#b9c6cc 96.5%);border-radius:4px;overflow:hidden;border:1px solid rgba(20,20,20,0.55);"><div style="position:absolute;left:0;top:0;right:0;height:20px;background:#1f4a4c;border-bottom:1.5px solid rgba(190,190,175,0.8);"></div></div>
<div class="t" style="top:994.99px;font-size:15.6px;color:#3fd0d4;left:264.60px;transform-origin:0 0;transform:scaleX(0.916);">Ch 2</div>
<div class="t" style="top:1019.16px;font-size:15.4px;color:#101010;left:265.50px;transform-origin:0 0;transform:scaleX(1.052);">1.7 V/div</div>
<div class="t" style="top:1039.16px;font-size:15.4px;color:#101010;left:265.50px;transform-origin:0 0;transform:scaleX(0.992);">Ter…</div>
<div class="t" style="top:1059.16px;font-size:15.4px;color:#101010;left:265.50px;transform-origin:0 0;transform:scaleX(1.031);">200 kHz</div>
<div class="t" style="top:1059.58px;font-size:9px;color:#101010;font-weight:700;left:335.80px;">B</div>
<div class="t" style="top:1063.83px;font-size:8px;color:#101010;font-weight:700;left:341.40px;">W</div>
<div class="b" style="left:358.50px;top:993.00px;width:95.50px;height:84.00px;background:linear-gradient(#cdcdcd,#cdcdcd 95.5%,#b9c6cc 96.5%);border-radius:4px;overflow:hidden;border:1px solid rgba(20,20,20,0.55);"><div style="position:absolute;left:0;top:0;right:0;height:20px;background:#3b4424;border-bottom:1.5px solid rgba(190,190,175,0.8);"></div></div>
<div class="t" style="top:994.99px;font-size:15.6px;color:#9bd236;left:365.50px;transform-origin:0 0;transform:scaleX(0.916);">Ch 4</div>
<div class="t" style="top:1019.16px;font-size:15.4px;color:#101010;left:366.40px;transform-origin:0 0;transform:scaleX(1.097);">5 A/div</div>
<div class="t" style="top:1039.16px;font-size:15.4px;color:#101010;left:366.40px;transform-origin:0 0;transform:scaleX(1.055);">1 MΩ</div>
<div class="t" style="top:1059.16px;font-size:15.4px;color:#101010;left:366.40px;transform-origin:0 0;transform:scaleX(1.031);">200 kHz</div>
<div class="t" style="top:1059.58px;font-size:9px;color:#101010;font-weight:700;left:436.70px;">B</div>
<div class="t" style="top:1063.83px;font-size:8px;color:#101010;font-weight:700;left:442.30px;">W</div>
<svg width="1920" height="1080"><path d="M414.5 1045.0c0.8 -4.6 2.3 -6.2 3.6 -5.2c1.9 1.6 1.5 9 3.8 10.2c1.6 0.7 2.8 -1 3.4 -5" stroke="#222" stroke-width="1.4" fill="none"/></svg>
<div class="b" style="left:464.20px;top:992.00px;width:206.60px;height:92.00px;background:#f04068;border-radius:6px;"></div>
<div class="b" style="left:469.90px;top:993.00px;width:94.50px;height:84.00px;background:linear-gradient(#cdcdcd,#cdcdcd 95.5%,#b9c6cc 96.5%);border-radius:4px;overflow:hidden;border:1px solid rgba(20,20,20,0.55);"><div style="position:absolute;left:0;top:0;right:0;height:20px;background:#59222b;border-bottom:1.5px solid rgba(190,190,175,0.8);"></div></div>
<div class="t" style="top:994.99px;font-size:15.6px;color:#ffffff;left:476.90px;transform-origin:0 0;transform:scaleX(0.916);">Ch 3</div>
<div class="t" style="top:1019.16px;font-size:15.4px;color:#101010;left:477.80px;transform-origin:0 0;transform:scaleX(1.052);">1.9 V/div</div>
<div class="t" style="top:1039.16px;font-size:15.4px;color:#101010;left:477.80px;transform-origin:0 0;transform:scaleX(1.055);">1 MΩ</div>
<div class="t" style="top:1059.16px;font-size:15.4px;color:#101010;left:477.80px;transform-origin:0 0;transform:scaleX(1.031);">200 kHz</div>
<div class="t" style="top:1059.58px;font-size:9px;color:#101010;font-weight:700;left:548.10px;">B</div>
<div class="t" style="top:1063.83px;font-size:8px;color:#101010;font-weight:700;left:553.70px;">W</div>
<svg width="1920" height="1080"><path d="M525.9 1045.0c0.8 -4.6 2.3 -6.2 3.6 -5.2c1.9 1.6 1.5 9 3.8 10.2c1.6 0.7 2.8 -1 3.4 -5" stroke="#222" stroke-width="1.4" fill="none"/></svg>
<div class="b" style="left:570.50px;top:993.00px;width:95.20px;height:84.00px;background:linear-gradient(#cdcdcd,#cdcdcd 95.5%,#b9c6cc 96.5%);border-radius:4px;overflow:hidden;border:1px solid rgba(20,20,20,0.55);"><div style="position:absolute;left:0;top:0;right:0;height:20px;background:#1f2150;border-bottom:1.5px solid rgba(190,190,175,0.8);"></div></div>
<div class="t" style="top:994.99px;font-size:15.6px;color:#ffffff;left:577.50px;transform-origin:0 0;transform:scaleX(0.916);">Ch 6</div>
<div class="t" style="top:1019.16px;font-size:15.4px;color:#101010;left:578.40px;transform-origin:0 0;transform:scaleX(1.069);">5 V/div</div>
<div class="t" style="top:1039.16px;font-size:15.4px;color:#101010;left:578.40px;transform-origin:0 0;transform:scaleX(1.055);">1 MΩ</div>
<div class="t" style="top:1059.16px;font-size:15.4px;color:#101010;left:578.40px;transform-origin:0 0;transform:scaleX(1.031);">200 kHz</div>
<div class="t" style="top:1059.58px;font-size:9px;color:#101010;font-weight:700;left:648.70px;">B</div>
<div class="t" style="top:1063.83px;font-size:8px;color:#101010;font-weight:700;left:654.30px;">W</div>
<svg width="1920" height="1080"><path d="M626.5 1045.0c0.8 -4.6 2.3 -6.2 3.6 -5.2c1.9 1.6 1.5 9 3.8 10.2c1.6 0.7 2.8 -1 3.4 -5" stroke="#222" stroke-width="1.4" fill="none"/></svg>
<div class="b" style="left:675.60px;top:992.80px;width:96.60px;height:84.40px;background:#7d7d7d;border-radius:5px;overflow:hidden;"><div style="position:absolute;left:0;top:0;right:0;height:22px;background:linear-gradient(#a2692a,#a2692a 80%,#8f7050);"></div></div>
<div class="t" style="top:994.99px;font-size:15.6px;color:#1c1206;left:682.00px;transform-origin:0 0;transform:scaleX(1.065);">Math 1</div>
<div class="t" style="top:1019.16px;font-size:15.4px;color:#141414;left:684.30px;transform-origin:0 0;transform:scaleX(0.996);">12.9803 …</div>
<div class="t" style="top:1039.16px;font-size:15.4px;color:#141414;left:683.60px;transform-origin:0 0;transform:scaleX(1.066);">intg(Ch1…</div>
<div class="t" style="top:1059.16px;font-size:15.4px;color:#141414;left:683.60px;transform-origin:0 0;transform:scaleX(0.990);">Meas 1</div>
<div class="btn" style="left:845px;top:992px;width:42.299999999999955px;height:86px;border-radius:8px;"></div>
<div class="b" style="left:848.60px;top:1000.60px;width:35.10px;height:2.60px;background:#e0409c;border-radius:1px;"></div>
<div class="t" style="top:1027.94px;font-size:19.8px;color:#f4f4f4;left:866.20px;transform:translateX(-50%) ;">7</div>
<div class="btn" style="left:893px;top:992px;width:42px;height:86px;border-radius:8px;"></div>
<div class="b" style="left:896.60px;top:1000.60px;width:34.80px;height:2.60px;background:#10c488;border-radius:1px;"></div>
<div class="t" style="top:1027.94px;font-size:19.8px;color:#f4f4f4;left:914.00px;transform:translateX(-50%) ;">8</div>
<div class="btn" style="left:958.4px;top:992px;width:42.200000000000045px;height:86px;border-radius:8px;"></div>
<div class="b" style="left:962.00px;top:1000.60px;width:35.00px;height:2.60px;background:#a0222a;border-radius:1px;"></div>
<div class="t" style="top:1015.30px;font-size:14.9px;color:#f4f4f4;left:979.50px;transform:translateX(-50%) scaleX(1.140);">Add</div>
<div class="t" style="top:1031.45px;font-size:14.9px;color:#f4f4f4;left:979.50px;transform:translateX(-50%) scaleX(1.097);">New</div>
<div class="t" style="top:1047.60px;font-size:14.9px;color:#f4f4f4;left:979.50px;transform:translateX(-50%) scaleX(1.166);">Math</div>
<div class="btn" style="left:1006.4px;top:992px;width:41.89999999999998px;height:86px;border-radius:8px;"></div>
<div class="b" style="left:1010.00px;top:1000.60px;width:34.70px;height:2.60px;background:#cfcfcf;border-radius:1px;"></div>
<div class="t" style="top:1015.30px;font-size:14.9px;color:#f4f4f4;left:1027.35px;transform:translateX(-50%) scaleX(1.140);">Add</div>
<div class="t" style="top:1031.45px;font-size:14.9px;color:#f4f4f4;left:1027.35px;transform:translateX(-50%) scaleX(1.097);">New</div>
<div class="t" style="top:1047.60px;font-size:14.9px;color:#f4f4f4;left:1027.35px;transform:translateX(-50%) scaleX(1.035);">Ref</div>
<div class="btn" style="left:1054px;top:992px;width:41.799999999999955px;height:86px;border-radius:8px;"></div>
<div class="b" style="left:1057.60px;top:1000.60px;width:34.60px;height:2.60px;background:#b04af0;border-radius:1px;"></div>
<div class="t" style="top:1015.30px;font-size:14.9px;color:#f4f4f4;left:1074.90px;transform:translateX(-50%) scaleX(1.140);">Add</div>
<div class="t" style="top:1031.45px;font-size:14.9px;color:#f4f4f4;left:1074.90px;transform:translateX(-50%) scaleX(1.097);">New</div>
<div class="t" style="top:1047.60px;font-size:14.9px;color:#f4f4f4;left:1074.90px;transform:translateX(-50%) scaleX(0.974);">Bus</div>
<div class="btn" style="left:1118px;top:992px;width:42.299999999999955px;height:86px;border-radius:8px;"></div>
<div class="b" style="left:1121.60px;top:1000.60px;width:35.10px;height:2.60px;background:#454545;border-radius:1px;"></div>
<div class="t" style="top:1031.45px;font-size:14.9px;color:#f4f4f4;left:1139.15px;transform:translateX(-50%) scaleX(1.088);">DVM</div>
<div class="btn" style="left:1171.3px;top:992px;width:42.100000000000136px;height:86px;border-radius:8px;"></div>
<div class="b" style="left:1174.90px;top:1000.60px;width:34.90px;height:2.60px;background:#454545;border-radius:1px;"></div>
<div class="t" style="top:1031.45px;font-size:14.9px;color:#f4f4f4;left:1192.35px;transform:translateX(-50%) scaleX(0.960);">AFG</div>
<div class="b" style="left:1237.80px;top:994.00px;width:212.20px;height:82.40px;background:#cbcbcb;border-radius:5px;overflow:hidden;border:1px solid rgba(20,20,20,0.6);"><div style="position:absolute;left:0;top:0;right:0;height:19.5px;background:#5b5b5b;"></div></div>
<div class="t" style="top:994.99px;font-size:15.6px;color:#f4f4f4;left:1244.60px;transform-origin:0 0;transform:scaleX(1.114);">Horizontal</div>
<div class="t" style="top:1019.16px;font-size:15.4px;color:#101010;left:1245.30px;transform-origin:0 0;transform:scaleX(1.036);">2 ms/div</div>
<div class="t" style="top:1019.16px;font-size:15.4px;color:#101010;left:1358.60px;transform-origin:0 0;transform:scaleX(0.988);">20 ms</div>
<div class="t" style="top:1039.16px;font-size:15.4px;color:#101010;left:1245.30px;transform-origin:0 0;transform:scaleX(0.938);">SR: 1 MS/s</div>
<div class="t" style="top:1039.16px;font-size:15.4px;color:#101010;left:1358.60px;transform-origin:0 0;transform:scaleX(1.023);">1 µs/pt</div>
<div class="t" style="top:1059.16px;font-size:15.4px;color:#101010;left:1245.30px;transform-origin:0 0;transform:scaleX(1.013);">RL: 20 kpts</div>
<div class="t" style="top:1059.16px;font-size:15.4px;color:#101010;left:1384.40px;transform-origin:0 0;transform:scaleX(1.026);">26%</div>
<svg width="1920" height="1080"><path d="M1358.8 1060.5H1367.4V1067.5L1363.1 1072L1358.8 1067.5Z" fill="#111" stroke="#e8801a" stroke-width="1"/><path d="M1360.6 1062.6H1365.6M1363.1 1062.6V1067.4" stroke="#fff" stroke-width="1.3" fill="none"/></svg>
<div class="b" style="left:1456.20px;top:994.00px;width:169.30px;height:82.40px;background:#cbcbcb;border-radius:5px;overflow:hidden;border:1px solid rgba(20,20,20,0.6);"><div style="position:absolute;left:0;top:0;right:0;height:19.5px;background:#5b5b5b;"></div></div>
<div class="t" style="top:994.99px;font-size:15.6px;color:#f4f4f4;left:1463.00px;transform-origin:0 0;transform:scaleX(1.038);">Trigger</div>
<div class="b" style="left:1462.80px;top:1019.00px;width:32.20px;height:17.20px;background:#f8ec3a;border:1px solid #3a3a10;border-radius:5px;"></div>
<div class="t" style="top:1020.08px;font-size:15.5px;color:#101010;left:1478.90px;transform:translateX(-50%) ;">1</div>
<svg width="1920" height="1080"><path d="M1505.5 1034H1509.5L1517.5 1021H1522" stroke="#6e6e8e" stroke-width="1.5" fill="none"/></svg>
<div class="t" style="top:1019.16px;font-size:15.4px;color:#101010;left:1536.50px;transform-origin:0 0;transform:scaleX(1.030);">-588 mV</div>
<div class="b" style="left:1631.80px;top:994.00px;width:158.80px;height:82.40px;background:#cbcbcb;border-radius:5px;overflow:hidden;border:1px solid rgba(20,20,20,0.6);"><div style="position:absolute;left:0;top:0;right:0;height:19.5px;background:#5b5b5b;"></div></div>
<div class="t" style="top:994.99px;font-size:15.6px;color:#f4f4f4;left:1638.60px;transform-origin:0 0;transform:scaleX(1.083);">Acquisition</div>
<div class="t" style="top:1019.16px;font-size:15.4px;color:#101010;left:1639.00px;transform-origin:0 0;transform:scaleX(1.097);">Manual,</div>
<div class="t" style="top:1019.16px;font-size:15.4px;color:#101010;right:137.30px;transform-origin:100% 0;transform:scaleX(1.061);">Analyze</div>
<div class="t" style="top:1039.16px;font-size:15.4px;color:#101010;left:1639.00px;transform-origin:0 0;transform:scaleX(1.041);">High Res: 16 bits</div>
<div class="t" style="top:1059.16px;font-size:15.4px;color:#101010;left:1639.00px;transform-origin:0 0;transform:scaleX(1.028);">Single: 0 /1</div>
<div class="b" style="left:1814.20px;top:992.00px;width:96.40px;height:38.60px;background:#fa2224;border-radius:6px;border:1px solid #b84a4a;"></div>
<div class="t" style="top:1002.64px;font-size:14.6px;color:#fff;font-weight:700;left:1861.80px;transform:translateX(-50%) scaleX(0.948);">Preview</div>
</body></html>
